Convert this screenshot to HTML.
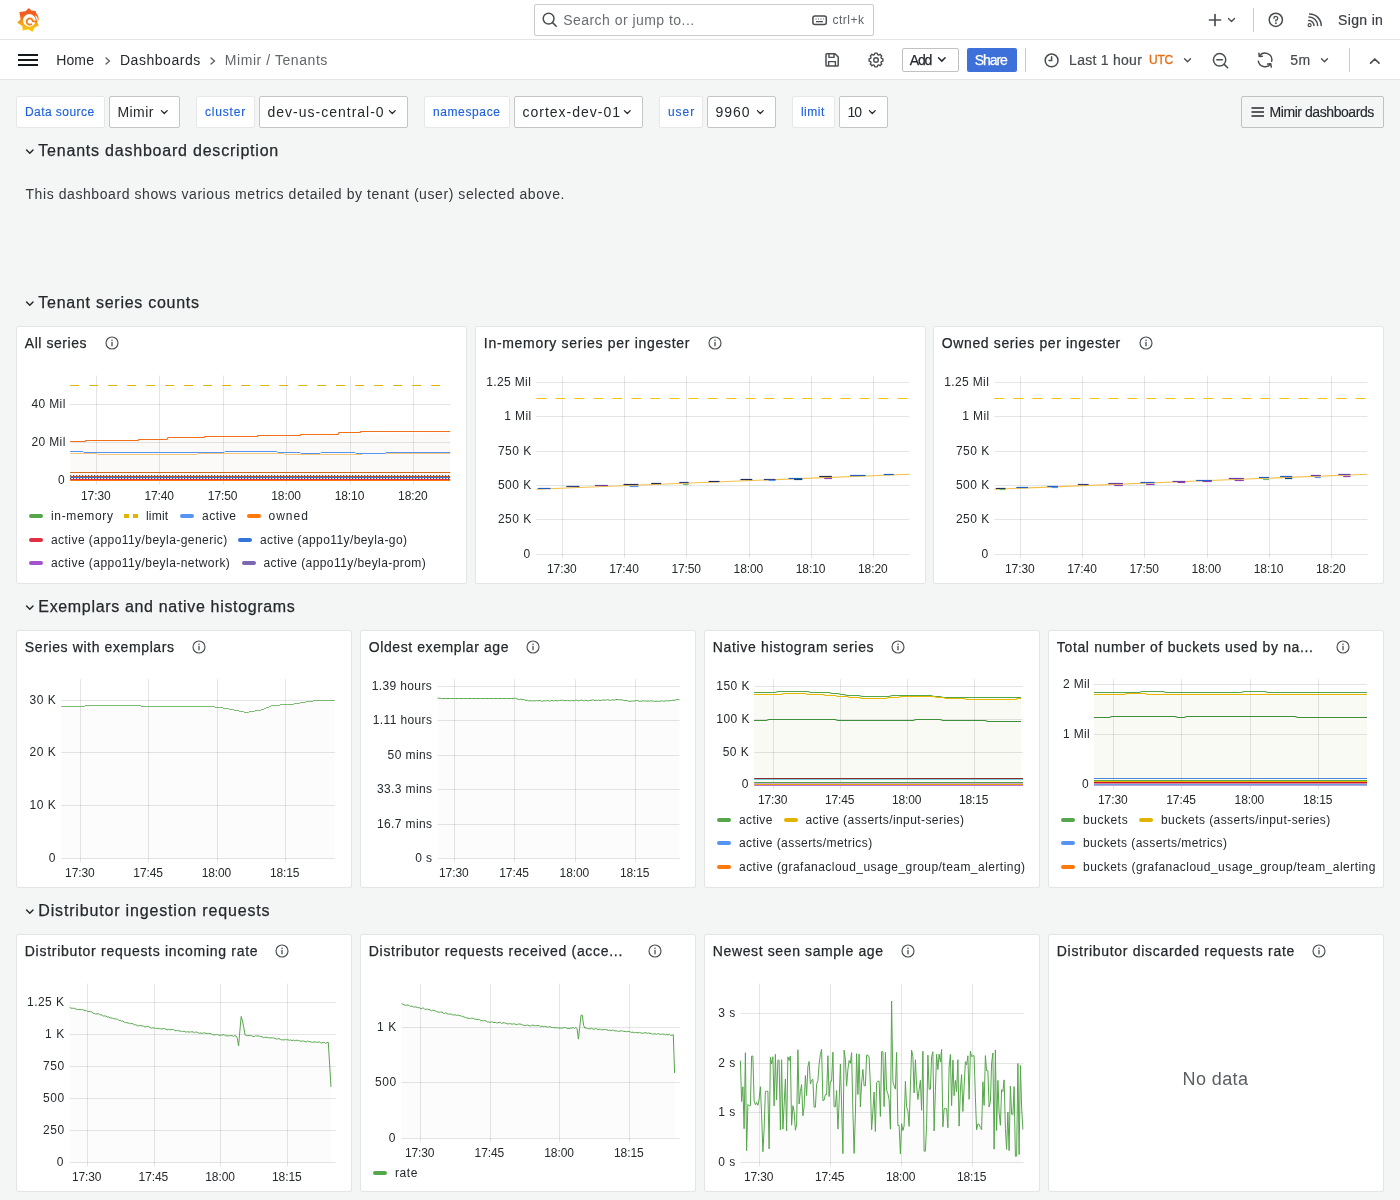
<!DOCTYPE html><html><head><meta charset="utf-8"><title>Mimir / Tenants - Dashboards - Grafana</title>
<style>
html,body{margin:0;padding:0}
body{width:1400px;height:1200px;overflow:hidden;background:#f4f5f5;position:relative;font-family:"Liberation Sans",sans-serif}
.a{position:absolute;display:block}
.t{position:absolute;white-space:nowrap;font-family:"Liberation Sans",sans-serif;-webkit-font-smoothing:antialiased}
#root{position:absolute;left:0;top:0;width:1400px;height:1200px;will-change:transform}
svg.a{overflow:visible}
</style></head><body><div id="root">

<div class="a" style="left:0px;top:0px;width:1400px;height:39px;background:#ffffff;border-radius:0px"></div>
<div class="a" style="left:0px;top:39px;width:1400px;height:1px;background:#e3e5e6;border-radius:0px"></div>
<div class="a" style="left:0px;top:40px;width:1400px;height:39px;background:#ffffff;border-radius:0px"></div>
<div class="a" style="left:0px;top:79px;width:1400px;height:1px;background:#e3e5e6;border-radius:0px"></div>
<svg class="a" style="left:14px;top:5px;" width="30" height="30" viewBox="0 0 30 30"><defs><linearGradient id="lg" x1="0" y1="1" x2="0" y2="0"><stop offset="0" stop-color="#f9d30c"/><stop offset="0.35" stop-color="#f8a515"/><stop offset="0.7" stop-color="#f1601f"/><stop offset="1" stop-color="#f05a28"/></linearGradient></defs>
<path fill="url(#lg)" d="M15 2.9 L17.3 5.6 L21.6 5.9 L22.4 8.6 Q24.6 10.6 24.8 14.2 L23.2 17.6 L24.8 20.5 L20.6 22.4 L18.4 26.9 L14.6 24.6 L8.6 25.6 L8.4 21.2 L3.2 17.6 L6.6 14.6 L5.4 7 L11.4 6.2 Z"/>
<circle cx="15.3" cy="15.4" r="6.3" fill="#fff"/>
<path d="M21.3 10.6 Q23.6 13 23.4 15.6" stroke="#fff" stroke-width="1.1" fill="none"/>
<path d="M17.3 19.2 A3.1 3.1 0 1 1 18.8 16.2 L22 16.6" stroke="#f37a1d" stroke-width="1.8" fill="none" stroke-linecap="round"/></svg>
<div class="a" style="left:534px;top:4px;width:340px;height:32px;background:#ffffff;border-radius:2px;border:1px solid #c9cbce;box-sizing:border-box"></div>
<svg class="a" style="left:542px;top:12px;" width="16" height="16" viewBox="0 0 16 16"><circle cx="6.6" cy="6.6" r="5.4" stroke="#4a4e53" stroke-width="1.5" fill="none"/><path d="M10.6 10.6 L14.2 14.2" stroke="#4a4e53" stroke-width="1.6" stroke-linecap="round"/></svg>
<span class="t" style="left:563.20px;top:12.85px;font-size:14px;line-height:14px;color:#6a6e72;letter-spacing:0.463px">Search or jump to...</span>
<svg class="a" style="left:812px;top:15px;" width="16" height="10" viewBox="0 0 16 10"><rect x="0.9" y="0.9" width="13.4" height="8.6" rx="2" stroke="#4a4e53" stroke-width="1.5" fill="none"/><path d="M3.5 4 h1 M6 4 h1 M8.5 4 h1 M11 4 h0.8 M4 6.6 h7" stroke="#4a4e53" stroke-width="1.1"/></svg>
<span class="t" style="left:832.40px;top:13.84px;font-size:12px;line-height:12px;color:#5f6368;letter-spacing:0.500px">ctrl+k</span>
<svg class="a" style="left:1208px;top:13px;" width="14" height="14" viewBox="0 0 14 14"><path d="M7 1.5 V12.5 M1.5 7 H12.5" stroke="#4a4e53" stroke-width="1.7" stroke-linecap="round"/></svg>
<svg class="a" style="left:1227px;top:16px;" width="10" height="8" viewBox="0 0 10 8"><path d="M1.5 2.5 L4.5 5.5 L7.5 2.5" stroke="#4a4e53" stroke-width="1.4" fill="none" stroke-linecap="round" stroke-linejoin="round"/></svg>
<div class="a" style="left:1253px;top:8px;width:1px;height:24px;background:#c9cbce;border-radius:0px"></div>
<svg class="a" style="left:1268px;top:12px;" width="16" height="16" viewBox="0 0 16 16"><circle cx="7.8" cy="7.8" r="6.6" stroke="#4a4e53" stroke-width="1.5" fill="none"/><path d="M5.9 6.2 A1.9 1.9 0 1 1 7.9 8.2 V9" stroke="#4a4e53" stroke-width="1.4" fill="none" stroke-linecap="round"/><circle cx="7.9" cy="11.2" r="0.9" fill="#4a4e53"/></svg>
<svg class="a" style="left:1307px;top:13px;" width="16" height="15" viewBox="0 0 16 15"><circle cx="2.6" cy="12.2" r="1.5" stroke="#4a4e53" stroke-width="1.2" fill="none"/><path d="M1.8 7.6 A5 5 0 0 1 7 12.6 M2 4 A8.6 8.6 0 0 1 10.6 12.6 M2.6 1 A11.6 11.6 0 0 1 14.2 12.6" stroke="#4a4e53" stroke-width="1.5" fill="none" stroke-linecap="round"/></svg>
<span class="t" style="left:1338.00px;top:13.35px;font-size:14px;line-height:14px;color:#3a3e42;letter-spacing:0.350px;-webkit-text-stroke:0.2px #3a3e42">Sign in</span>
<svg class="a" style="left:17px;top:53px;" width="22" height="14" viewBox="0 0 22 14"><path d="M1 2 H21 M1 7 H21 M1 12 H21" stroke="#15181c" stroke-width="2" stroke-linecap="butt"/></svg>
<span class="t" style="left:56.20px;top:53.15px;font-size:14px;line-height:14px;color:#24292e;letter-spacing:0.133px">Home</span>
<svg class="a" style="left:104px;top:56px;" width="8" height="10" viewBox="0 0 8 10"><path d="M2 2 L5.5 5 L2 8" stroke="#5a5e62" stroke-width="1.3" fill="none" stroke-linecap="round"/></svg>
<span class="t" style="left:119.90px;top:53.15px;font-size:14px;line-height:14px;color:#24292e;letter-spacing:0.544px">Dashboards</span>
<svg class="a" style="left:209px;top:56px;" width="8" height="10" viewBox="0 0 8 10"><path d="M2 2 L5.5 5 L2 8" stroke="#5a5e62" stroke-width="1.3" fill="none" stroke-linecap="round"/></svg>
<span class="t" style="left:224.80px;top:53.15px;font-size:14px;line-height:14px;color:#62666b;letter-spacing:0.564px">Mimir / Tenants</span>
<svg class="a" style="left:824px;top:52px;" width="16" height="16" viewBox="0 0 16 16"><path d="M2 2.6 A0.8 0.8 0 0 1 2.8 1.8 H11 L14.2 5 V13.2 A0.8 0.8 0 0 1 13.4 14 H2.8 A0.8 0.8 0 0 1 2 13.2 Z" stroke="#4a4e53" stroke-width="1.5" fill="none" stroke-linejoin="round"/><path d="M5 2 V5.4 H10 V2 M4.6 14 V9.6 H11.4 V14" stroke="#4a4e53" stroke-width="1.4" fill="none"/></svg>
<svg class="a" style="left:868px;top:52px;" width="16" height="16" viewBox="0 0 16 16"><path d="M6.35 2.65 L6.82 1.10 L9.18 1.10 L9.65 2.65 L10.61 3.05 L12.04 2.28 L13.72 3.96 L12.95 5.39 L13.35 6.35 L14.90 6.82 L14.90 9.18 L13.35 9.65 L12.95 10.61 L13.72 12.04 L12.04 13.72 L10.61 12.95 L9.65 13.35 L9.18 14.90 L6.82 14.90 L6.35 13.35 L5.39 12.95 L3.96 13.72 L2.28 12.04 L3.05 10.61 L2.65 9.65 L1.10 9.18 L1.10 6.82 L2.65 6.35 L3.05 5.39 L2.28 3.96 L3.96 2.28 L5.39 3.05 Z" stroke="#4a4e53" stroke-width="1.4" fill="none" stroke-linejoin="round"/><circle cx="8" cy="8" r="2.3" stroke="#4a4e53" stroke-width="1.4" fill="none"/></svg>
<div class="a" style="left:902px;top:48px;width:57px;height:24px;background:#ffffff;border-radius:2px;border:1px solid #bfc1c4;box-sizing:border-box"></div>
<span class="t" style="left:909.80px;top:52.75px;font-size:14px;line-height:14px;color:#24292e;letter-spacing:-1.250px;-webkit-text-stroke:0.25px #24292e">Add</span>
<svg class="a" style="left:937px;top:56px;" width="10" height="8" viewBox="0 0 10 8"><path d="M1.5 1.8 L4.8 5.1 L8.1 1.8" stroke="#24292e" stroke-width="1.5" fill="none" stroke-linecap="round" stroke-linejoin="round"/></svg>
<div class="a" style="left:967px;top:48px;width:50px;height:24px;background:#3d71d9;border-radius:2px;border:none;box-sizing:border-box"></div>
<span class="t" style="left:974.80px;top:52.75px;font-size:14px;line-height:14px;color:#ffffff;letter-spacing:-1.100px;-webkit-text-stroke:0.25px #ffffff">Share</span>
<div class="a" style="left:1025px;top:48px;width:1px;height:24px;background:#c9cbce;border-radius:0px"></div>
<svg class="a" style="left:1044px;top:53px;" width="16" height="16" viewBox="0 0 16 16"><circle cx="7.6" cy="7.4" r="6.4" stroke="#4a4e53" stroke-width="1.5" fill="none"/><path d="M7.6 3.8 V7.6 H5" stroke="#4a4e53" stroke-width="1.5" fill="none" stroke-linecap="round"/></svg>
<span class="t" style="left:1069.10px;top:53.15px;font-size:14px;line-height:14px;color:#474b50;letter-spacing:0.270px;-webkit-text-stroke:0.2px #474b50">Last 1 hour</span>
<span class="t" style="left:1149.00px;top:53.84px;font-size:12px;line-height:12px;color:#e86b15;letter-spacing:-0.250px;-webkit-text-stroke:0.3px #e86b15">UTC</span>
<svg class="a" style="left:1183px;top:57px;" width="10" height="8" viewBox="0 0 10 8"><path d="M1.5 1.8 L4.5 4.8 L7.5 1.8" stroke="#4a4e53" stroke-width="1.4" fill="none" stroke-linecap="round" stroke-linejoin="round"/></svg>
<svg class="a" style="left:1212px;top:52px;" width="18" height="17" viewBox="0 0 18 17"><circle cx="7.6" cy="7.8" r="6.2" stroke="#4a4e53" stroke-width="1.5" fill="none"/><path d="M4.8 7.8 H10.4 M12.2 12.4 L15.6 15.8" stroke="#4a4e53" stroke-width="1.6" stroke-linecap="round"/></svg>
<svg class="a" style="left:1256px;top:52px;" width="17" height="17" viewBox="0 0 17 17"><path d="M15.7 9.2 A6.8 6.8 0 0 0 3.4 4.1 M2.3 9.2 A6.8 6.8 0 0 0 14.5 11.9" stroke="#4a4e53" stroke-width="1.5" fill="none" stroke-linecap="round"/><path d="M2.9 1.2 L3.3 4.4 L6.4 4.3 M15.3 15 L14.7 11.8 L11.6 12.1" stroke="#4a4e53" stroke-width="1.5" fill="none" stroke-linecap="round" stroke-linejoin="round"/></svg>
<span class="t" style="left:1290.30px;top:53.15px;font-size:14px;line-height:14px;color:#474b50;letter-spacing:0.500px;-webkit-text-stroke:0.2px #474b50">5m</span>
<svg class="a" style="left:1320px;top:57px;" width="10" height="8" viewBox="0 0 10 8"><path d="M1.5 1.8 L4.5 4.8 L7.5 1.8" stroke="#4a4e53" stroke-width="1.4" fill="none" stroke-linecap="round" stroke-linejoin="round"/></svg>
<div class="a" style="left:1349px;top:48px;width:1px;height:24px;background:#c9cbce;border-radius:0px"></div>
<svg class="a" style="left:1369px;top:57px;" width="12" height="8" viewBox="0 0 12 8"><path d="M1.6 6.2 L5.8 2 L10 6.2" stroke="#4a4e53" stroke-width="1.7" fill="none" stroke-linecap="round" stroke-linejoin="round"/></svg>
<div class="a" style="left:16px;top:96px;width:89px;height:32px;background:#ffffff;border-radius:2px;border:1px solid #e6e7e8;box-sizing:border-box"></div>
<span class="t" style="left:24.90px;top:106.14px;font-size:12px;line-height:12px;color:#1f62e0;letter-spacing:0.460px;-webkit-text-stroke:0.15px #1f62e0">Data source</span>
<div class="a" style="left:109px;top:96px;width:71px;height:32px;background:#ffffff;border-radius:2px;border:1px solid #c3c5c8;box-sizing:border-box"></div>
<span class="t" style="left:117.50px;top:105.15px;font-size:14px;line-height:14px;color:#24292e;letter-spacing:0.400px">Mimir</span>
<svg class="a" style="left:159.5px;top:108.5px;" width="9" height="7" viewBox="0 0 9 7"><path d="M1.4 1.6 L4.3 4.5 L7.2 1.6" stroke="#24292e" stroke-width="1.3" fill="none" stroke-linecap="round" stroke-linejoin="round"/></svg>
<div class="a" style="left:196px;top:96px;width:59px;height:32px;background:#ffffff;border-radius:2px;border:1px solid #e6e7e8;box-sizing:border-box"></div>
<span class="t" style="left:204.90px;top:106.14px;font-size:12px;line-height:12px;color:#1f62e0;letter-spacing:0.833px;-webkit-text-stroke:0.15px #1f62e0">cluster</span>
<div class="a" style="left:259px;top:96px;width:149px;height:32px;background:#ffffff;border-radius:2px;border:1px solid #c3c5c8;box-sizing:border-box"></div>
<span class="t" style="left:267.50px;top:105.15px;font-size:14px;line-height:14px;color:#24292e;letter-spacing:1.000px">dev-us-central-0</span>
<svg class="a" style="left:387.5px;top:108.5px;" width="9" height="7" viewBox="0 0 9 7"><path d="M1.4 1.6 L4.3 4.5 L7.2 1.6" stroke="#24292e" stroke-width="1.3" fill="none" stroke-linecap="round" stroke-linejoin="round"/></svg>
<div class="a" style="left:424px;top:96px;width:86px;height:32px;background:#ffffff;border-radius:2px;border:1px solid #e6e7e8;box-sizing:border-box"></div>
<span class="t" style="left:432.90px;top:106.14px;font-size:12px;line-height:12px;color:#1f62e0;letter-spacing:0.625px;-webkit-text-stroke:0.15px #1f62e0">namespace</span>
<div class="a" style="left:514px;top:96px;width:129px;height:32px;background:#ffffff;border-radius:2px;border:1px solid #c3c5c8;box-sizing:border-box"></div>
<span class="t" style="left:522.50px;top:105.15px;font-size:14px;line-height:14px;color:#24292e;letter-spacing:1.000px">cortex-dev-01</span>
<svg class="a" style="left:622.5px;top:108.5px;" width="9" height="7" viewBox="0 0 9 7"><path d="M1.4 1.6 L4.3 4.5 L7.2 1.6" stroke="#24292e" stroke-width="1.3" fill="none" stroke-linecap="round" stroke-linejoin="round"/></svg>
<div class="a" style="left:659px;top:96px;width:44px;height:32px;background:#ffffff;border-radius:2px;border:1px solid #e6e7e8;box-sizing:border-box"></div>
<span class="t" style="left:667.90px;top:106.14px;font-size:12px;line-height:12px;color:#1f62e0;letter-spacing:1.000px;-webkit-text-stroke:0.15px #1f62e0">user</span>
<div class="a" style="left:707px;top:96px;width:69px;height:32px;background:#ffffff;border-radius:2px;border:1px solid #c3c5c8;box-sizing:border-box"></div>
<span class="t" style="left:715.50px;top:105.15px;font-size:14px;line-height:14px;color:#24292e;letter-spacing:1.000px">9960</span>
<svg class="a" style="left:755.5px;top:108.5px;" width="9" height="7" viewBox="0 0 9 7"><path d="M1.4 1.6 L4.3 4.5 L7.2 1.6" stroke="#24292e" stroke-width="1.3" fill="none" stroke-linecap="round" stroke-linejoin="round"/></svg>
<div class="a" style="left:792px;top:96px;width:43px;height:32px;background:#ffffff;border-radius:2px;border:1px solid #e6e7e8;box-sizing:border-box"></div>
<span class="t" style="left:800.90px;top:106.14px;font-size:12px;line-height:12px;color:#1f62e0;letter-spacing:0.500px;-webkit-text-stroke:0.15px #1f62e0">limit</span>
<div class="a" style="left:839px;top:96px;width:49px;height:32px;background:#ffffff;border-radius:2px;border:1px solid #c3c5c8;box-sizing:border-box"></div>
<span class="t" style="left:847.50px;top:105.15px;font-size:14px;line-height:14px;color:#24292e;letter-spacing:-1.000px">10</span>
<svg class="a" style="left:867.5px;top:108.5px;" width="9" height="7" viewBox="0 0 9 7"><path d="M1.4 1.6 L4.3 4.5 L7.2 1.6" stroke="#24292e" stroke-width="1.3" fill="none" stroke-linecap="round" stroke-linejoin="round"/></svg>
<div class="a" style="left:1241px;top:96px;width:143px;height:32px;background:none;border-radius:2px;border:1px solid #bfc1c4;box-sizing:border-box"></div>
<svg class="a" style="left:1250px;top:105px;" width="16" height="14" viewBox="0 0 16 14"><path d="M1.5 3 H14 M1.5 7 H14 M1.5 11 H14" stroke="#24292e" stroke-width="1.6"/></svg>
<span class="t" style="left:1269.50px;top:105.15px;font-size:14px;line-height:14px;color:#24292e;letter-spacing:-0.433px;-webkit-text-stroke:0.15px #24292e">Mimir dashboards</span>
<svg class="a" style="left:25px;top:148px;top:148px" width="10" height="8" viewBox="0 0 10 8"><path d="M1.6 2 L4.8 5.2 L8 2" stroke="#24292e" stroke-width="1.5" fill="none" stroke-linecap="round" stroke-linejoin="round"/></svg>
<span class="t" style="left:38.30px;top:143.46px;font-size:16px;line-height:16px;color:#24292e;letter-spacing:0.786px;-webkit-text-stroke:0.25px #24292e">Tenants dashboard description</span>
<span class="t" style="left:25.50px;top:187.15px;font-size:14px;line-height:14px;color:#33383d;letter-spacing:0.571px">This dashboard shows various metrics detailed by tenant (user) selected above.</span>
<svg class="a" style="left:25px;top:148px;top:300px" width="10" height="8" viewBox="0 0 10 8"><path d="M1.6 2 L4.8 5.2 L8 2" stroke="#24292e" stroke-width="1.5" fill="none" stroke-linecap="round" stroke-linejoin="round"/></svg>
<span class="t" style="left:38.30px;top:295.46px;font-size:16px;line-height:16px;color:#24292e;letter-spacing:0.737px;-webkit-text-stroke:0.25px #24292e">Tenant series counts</span>
<svg class="a" style="left:25px;top:148px;top:604px" width="10" height="8" viewBox="0 0 10 8"><path d="M1.6 2 L4.8 5.2 L8 2" stroke="#24292e" stroke-width="1.5" fill="none" stroke-linecap="round" stroke-linejoin="round"/></svg>
<span class="t" style="left:38.30px;top:599.46px;font-size:16px;line-height:16px;color:#24292e;letter-spacing:0.667px;-webkit-text-stroke:0.25px #24292e">Exemplars and native histograms</span>
<svg class="a" style="left:25px;top:148px;top:908px" width="10" height="8" viewBox="0 0 10 8"><path d="M1.6 2 L4.8 5.2 L8 2" stroke="#24292e" stroke-width="1.5" fill="none" stroke-linecap="round" stroke-linejoin="round"/></svg>
<span class="t" style="left:38.30px;top:903.46px;font-size:16px;line-height:16px;color:#24292e;letter-spacing:0.828px;-webkit-text-stroke:0.25px #24292e">Distributor ingestion requests</span>
<div class="a" style="left:16px;top:326px;width:451px;height:258px;background:#ffffff;border-radius:2px;border:1px solid #e3e5e7;box-sizing:border-box"></div>
<span class="t" style="left:24.80px;top:336.15px;font-size:14px;line-height:14px;color:#24292e;letter-spacing:0.556px;-webkit-text-stroke:0.25px #24292e">All series</span>
<svg class="a" style="left:105px;top:336px;" width="14" height="14" viewBox="0 0 14 14"><circle cx="7" cy="7" r="6" stroke="#4a4e53" stroke-width="1.15" fill="none"/><path d="M7 6.4 V9.8" stroke="#4a4e53" stroke-width="1.3" stroke-linecap="round"/><circle cx="7" cy="4.3" r="0.8" fill="#4a4e53"/></svg>
<svg class="a" style="left:0;top:0" width="1400" height="1200" viewBox="0 0 1400 1200"><path d="M70.2 441.9 L450.2 433.0 L450.2 480.7 L70.2 480.7 Z" fill="#fbfaf8"/><path d="M70.2 404.5 H450.2" stroke="rgba(36,41,46,0.12)" stroke-width="1"/><path d="M70.2 442.5 H450.2" stroke="rgba(36,41,46,0.12)" stroke-width="1"/><path d="M70.2 480.5 H450.2" stroke="rgba(36,41,46,0.12)" stroke-width="1"/><path d="M96.5 375.6 V484.7" stroke="rgba(36,41,46,0.12)" stroke-width="1"/><path d="M159.5 375.6 V484.7" stroke="rgba(36,41,46,0.12)" stroke-width="1"/><path d="M223.5 375.6 V484.7" stroke="rgba(36,41,46,0.12)" stroke-width="1"/><path d="M286.5 375.6 V484.7" stroke="rgba(36,41,46,0.12)" stroke-width="1"/><path d="M350.5 375.6 V484.7" stroke="rgba(36,41,46,0.12)" stroke-width="1"/><path d="M413.5 375.6 V484.7" stroke="rgba(36,41,46,0.12)" stroke-width="1"/><path d="M70.2 385.5 L450.2 385.5" stroke="#e0b400" stroke-width="1" fill="none" stroke-opacity="1" stroke-dasharray="9 10" stroke-linejoin="round"/><path d="M70.2 453.5 L97.0 453.5 L98.0 454.5 L197.0 454.5 L198.0 453.5 L284.0 453.5 L285.0 454.5 L362.0 454.5 L363.0 453.5 L450.2 453.5" stroke="#f2c77a" stroke-width="1" fill="none" stroke-opacity="1" stroke-linejoin="round"/><path d="M70.2 451.5 L83.0 451.5 L84.0 452.5 L224.0 452.5 L225.0 451.5 L277.0 451.5 L278.0 452.5 L300.0 452.5 L301.0 453.5 L320.0 453.5 L321.0 452.5 L355.0 452.5 L356.0 453.5 L385.0 453.5 L386.0 452.5 L450.2 452.5" stroke="#5794f2" stroke-width="1" fill="none" stroke-opacity="1" stroke-linejoin="round"/><path d="M70.2 441.5 L85.0 441.5 L86.0 440.5 L138.0 440.5 L139.0 439.5 L167.0 439.5 L168.0 437.5 L204.0 437.5 L205.0 436.5 L257.0 436.5 L258.0 435.5 L300.0 435.5 L301.0 434.5 L338.0 434.5 L339.0 432.5 L360.0 432.5 L361.0 431.5 L450.2 431.5" stroke="#f2701c" stroke-width="1.2" fill="none" stroke-opacity="1" stroke-linejoin="round"/><path d="M70.2 472.5 L450.2 472.5" stroke="#d2691e" stroke-width="1" fill="none" stroke-opacity="1" stroke-linejoin="round"/><path d="M70.2 475.5 L450.2 475.5" stroke="#333333" stroke-width="1" fill="none" stroke-opacity="1" stroke-dasharray="1 2" stroke-linejoin="round"/><path d="M70.2 476.5 L450.2 476.5" stroke="#c8501e" stroke-width="1" fill="none" stroke-opacity="1" stroke-linejoin="round"/><path d="M70.2 477.5 L450.2 477.5" stroke="#3274d9" stroke-width="1" fill="none" stroke-opacity="1" stroke-linejoin="round"/><path d="M70.2 478.5 L450.2 478.5" stroke="#333333" stroke-width="1" fill="none" stroke-opacity="1" stroke-dasharray="1 2" stroke-linejoin="round"/><path d="M70.2 479.5 L450.2 479.5" stroke="#6ed0e0" stroke-width="1" fill="none" stroke-opacity="1" stroke-linejoin="round"/><path d="M70.2 479.5 L450.2 479.5" stroke="#e02f44" stroke-width="1" fill="none" stroke-opacity="1" stroke-linejoin="round"/><path d="M70.2 480.5 L450.2 480.5" stroke="#ff780a" stroke-width="1" fill="none" stroke-opacity="1" stroke-linejoin="round"/></svg>
<span class="t" style="left:31.38px;top:397.84px;font-size:12px;line-height:12px;color:#24292e;letter-spacing:0.384px">40 Mil</span>
<span class="t" style="left:31.38px;top:435.84px;font-size:12px;line-height:12px;color:#24292e;letter-spacing:0.384px">20 Mil</span>
<span class="t" style="left:57.88px;top:473.84px;font-size:12px;line-height:12px;color:#24292e;letter-spacing:0.000px">0</span>
<span class="t" style="left:81.00px;top:489.54px;font-size:12px;line-height:12px;color:#24292e;letter-spacing:-0.100px">17:30</span>
<span class="t" style="left:144.42px;top:489.54px;font-size:12px;line-height:12px;color:#24292e;letter-spacing:-0.100px">17:40</span>
<span class="t" style="left:207.84px;top:489.54px;font-size:12px;line-height:12px;color:#24292e;letter-spacing:-0.100px">17:50</span>
<span class="t" style="left:271.26px;top:489.54px;font-size:12px;line-height:12px;color:#24292e;letter-spacing:-0.100px">18:00</span>
<span class="t" style="left:334.68px;top:489.54px;font-size:12px;line-height:12px;color:#24292e;letter-spacing:-0.100px">18:10</span>
<span class="t" style="left:398.10px;top:489.54px;font-size:12px;line-height:12px;color:#24292e;letter-spacing:-0.100px">18:20</span>
<div class="a" style="left:29px;top:513.7px;width:14px;height:4px;background:#56a64b;border-radius:2px"></div>
<span class="t" style="left:51.00px;top:509.94px;font-size:12px;line-height:12px;color:#24292e;letter-spacing:0.662px">in-memory</span>
<div class="a" style="left:124px;top:513.7px;width:5px;height:4px;background:#e0b400;border-radius:0px"></div>
<div class="a" style="left:133px;top:513.7px;width:5px;height:4px;background:#e0b400;border-radius:0px"></div>
<span class="t" style="left:146.00px;top:509.94px;font-size:12px;line-height:12px;color:#24292e;letter-spacing:0.200px">limit</span>
<div class="a" style="left:180px;top:513.7px;width:14px;height:4px;background:#5794f2;border-radius:2px"></div>
<span class="t" style="left:202.00px;top:509.94px;font-size:12px;line-height:12px;color:#24292e;letter-spacing:0.512px">active</span>
<div class="a" style="left:246.5px;top:513.7px;width:14px;height:4px;background:#ff780a;border-radius:2px"></div>
<span class="t" style="left:268.50px;top:509.94px;font-size:12px;line-height:12px;color:#24292e;letter-spacing:1.000px">owned</span>
<div class="a" style="left:29px;top:538px;width:14px;height:4px;background:#e02f44;border-radius:2px"></div>
<span class="t" style="left:51.00px;top:534.24px;font-size:12px;line-height:12px;color:#24292e;letter-spacing:0.448px">active (appo11y/beyla-generic)</span>
<div class="a" style="left:238px;top:538px;width:14px;height:4px;background:#3274d9;border-radius:2px"></div>
<span class="t" style="left:260.00px;top:534.24px;font-size:12px;line-height:12px;color:#24292e;letter-spacing:0.408px">active (appo11y/beyla-go)</span>
<div class="a" style="left:29px;top:560.9px;width:14px;height:4px;background:#a352cc;border-radius:2px"></div>
<span class="t" style="left:51.00px;top:557.14px;font-size:12px;line-height:12px;color:#24292e;letter-spacing:0.448px">active (appo11y/beyla-network)</span>
<div class="a" style="left:241.5px;top:560.9px;width:14px;height:4px;background:#7c68b0;border-radius:2px"></div>
<span class="t" style="left:263.50px;top:557.14px;font-size:12px;line-height:12px;color:#24292e;letter-spacing:0.423px">active (appo11y/beyla-prom)</span>
<div class="a" style="left:475px;top:326px;width:451px;height:258px;background:#ffffff;border-radius:2px;border:1px solid #e3e5e7;box-sizing:border-box"></div>
<span class="t" style="left:483.80px;top:336.15px;font-size:14px;line-height:14px;color:#24292e;letter-spacing:0.704px;-webkit-text-stroke:0.25px #24292e">In-memory series per ingester</span>
<svg class="a" style="left:707.5px;top:336px;" width="14" height="14" viewBox="0 0 14 14"><circle cx="7" cy="7" r="6" stroke="#4a4e53" stroke-width="1.15" fill="none"/><path d="M7 6.4 V9.8" stroke="#4a4e53" stroke-width="1.3" stroke-linecap="round"/><circle cx="7" cy="4.3" r="0.8" fill="#4a4e53"/></svg>
<svg class="a" style="left:0;top:0" width="1400" height="1200" viewBox="0 0 1400 1200"><path d="M536.4 382.5 H909.4" stroke="rgba(36,41,46,0.12)" stroke-width="1"/><path d="M536.4 416.5 H909.4" stroke="rgba(36,41,46,0.12)" stroke-width="1"/><path d="M536.4 451.5 H909.4" stroke="rgba(36,41,46,0.12)" stroke-width="1"/><path d="M536.4 485.5 H909.4" stroke="rgba(36,41,46,0.12)" stroke-width="1"/><path d="M536.4 519.5 H909.4" stroke="rgba(36,41,46,0.12)" stroke-width="1"/><path d="M536.4 554.5 H909.4" stroke="rgba(36,41,46,0.12)" stroke-width="1"/><path d="M562.5 375.6 V558.0" stroke="rgba(36,41,46,0.12)" stroke-width="1"/><path d="M624.5 375.6 V558.0" stroke="rgba(36,41,46,0.12)" stroke-width="1"/><path d="M686.5 375.6 V558.0" stroke="rgba(36,41,46,0.12)" stroke-width="1"/><path d="M749.5 375.6 V558.0" stroke="rgba(36,41,46,0.12)" stroke-width="1"/><path d="M811.5 375.6 V558.0" stroke="rgba(36,41,46,0.12)" stroke-width="1"/><path d="M873.5 375.6 V558.0" stroke="rgba(36,41,46,0.12)" stroke-width="1"/><path d="M536.4 398.5 L909.4 398.5" stroke="#f2c40c" stroke-width="1.2" fill="none" stroke-opacity="1" stroke-dasharray="10 9" stroke-linejoin="round"/><path d="M536.4 489.20 L909.4 474.20" stroke="#f2c04a" stroke-width="1.1" fill="none" stroke-opacity="1" stroke-linejoin="round"/><path d="M537.8 488.5 L550.6 488.5" stroke="#1f60c4" stroke-width="1.2" fill="none" stroke-opacity="1" stroke-linejoin="round"/><path d="M566.3 486.5 L579.4 486.5" stroke="#2f3d7a" stroke-width="1.2" fill="none" stroke-opacity="1" stroke-linejoin="round"/><path d="M595.0 485.5 L607.9 485.5" stroke="#6b3fa0" stroke-width="1.2" fill="none" stroke-opacity="1" stroke-linejoin="round"/><path d="M623.5 484.5 L638.4 484.5" stroke="#222a55" stroke-width="1.2" fill="none" stroke-opacity="1" stroke-linejoin="round"/><path d="M629.5 486.5 L638.4 486.5" stroke="#5794f2" stroke-width="1.2" fill="none" stroke-opacity="1" stroke-linejoin="round"/><path d="M651.2 483.5 L661.2 483.5" stroke="#222a55" stroke-width="1.2" fill="none" stroke-opacity="1" stroke-linejoin="round"/><path d="M679.3 482.5 L688.7 482.5" stroke="#2f3d7a" stroke-width="1.2" fill="none" stroke-opacity="1" stroke-linejoin="round"/><path d="M683.1 484.5 L688.7 484.5" stroke="#73bf69" stroke-width="1.2" fill="none" stroke-opacity="1" stroke-linejoin="round"/><path d="M708.6 481.5 L719.5 481.5" stroke="#222a55" stroke-width="1.2" fill="none" stroke-opacity="1" stroke-linejoin="round"/><path d="M740.5 479.5 L752.3 479.5" stroke="#222a55" stroke-width="1.2" fill="none" stroke-opacity="1" stroke-linejoin="round"/><path d="M763.9 479.5 L775.5 479.5" stroke="#2f3d7a" stroke-width="1.2" fill="none" stroke-opacity="1" stroke-linejoin="round"/><path d="M768.5 480.5 L775.5 480.5" stroke="#5794f2" stroke-width="1.2" fill="none" stroke-opacity="1" stroke-linejoin="round"/><path d="M788.6 478.5 L802.3 478.5" stroke="#1f60c4" stroke-width="1.2" fill="none" stroke-opacity="1" stroke-linejoin="round"/><path d="M794.1 479.5 L802.3 479.5" stroke="#0a437c" stroke-width="1.2" fill="none" stroke-opacity="1" stroke-linejoin="round"/><path d="M819.2 476.5 L831.9 476.5" stroke="#222a55" stroke-width="1.2" fill="none" stroke-opacity="1" stroke-linejoin="round"/><path d="M824.3 478.5 L831.9 478.5" stroke="#8e3fb0" stroke-width="1.2" fill="none" stroke-opacity="1" stroke-linejoin="round"/><path d="M850.1 475.5 L865.6 475.5" stroke="#1f60c4" stroke-width="1.2" fill="none" stroke-opacity="1" stroke-linejoin="round"/><path d="M883.7 474.5 L893.8 474.5" stroke="#1f60c4" stroke-width="1.2" fill="none" stroke-opacity="1" stroke-linejoin="round"/></svg>
<span class="t" style="left:486.28px;top:375.84px;font-size:12px;line-height:12px;color:#24292e;letter-spacing:0.360px">1.25 Mil</span>
<span class="t" style="left:504.30px;top:409.84px;font-size:12px;line-height:12px;color:#24292e;letter-spacing:0.375px">1 Mil</span>
<span class="t" style="left:497.94px;top:444.84px;font-size:12px;line-height:12px;color:#24292e;letter-spacing:0.465px">750 K</span>
<span class="t" style="left:497.94px;top:478.84px;font-size:12px;line-height:12px;color:#24292e;letter-spacing:0.465px">500 K</span>
<span class="t" style="left:497.94px;top:512.84px;font-size:12px;line-height:12px;color:#24292e;letter-spacing:0.465px">250 K</span>
<span class="t" style="left:523.38px;top:547.84px;font-size:12px;line-height:12px;color:#24292e;letter-spacing:0.000px">0</span>
<span class="t" style="left:547.00px;top:562.84px;font-size:12px;line-height:12px;color:#24292e;letter-spacing:-0.100px">17:30</span>
<span class="t" style="left:609.20px;top:562.84px;font-size:12px;line-height:12px;color:#24292e;letter-spacing:-0.100px">17:40</span>
<span class="t" style="left:671.40px;top:562.84px;font-size:12px;line-height:12px;color:#24292e;letter-spacing:-0.100px">17:50</span>
<span class="t" style="left:733.60px;top:562.84px;font-size:12px;line-height:12px;color:#24292e;letter-spacing:-0.100px">18:00</span>
<span class="t" style="left:795.80px;top:562.84px;font-size:12px;line-height:12px;color:#24292e;letter-spacing:-0.100px">18:10</span>
<span class="t" style="left:858.00px;top:562.84px;font-size:12px;line-height:12px;color:#24292e;letter-spacing:-0.100px">18:20</span>
<div class="a" style="left:933px;top:326px;width:451px;height:258px;background:#ffffff;border-radius:2px;border:1px solid #e3e5e7;box-sizing:border-box"></div>
<span class="t" style="left:941.80px;top:336.15px;font-size:14px;line-height:14px;color:#24292e;letter-spacing:0.625px;-webkit-text-stroke:0.25px #24292e">Owned series per ingester</span>
<svg class="a" style="left:1138.8px;top:336px;" width="14" height="14" viewBox="0 0 14 14"><circle cx="7" cy="7" r="6" stroke="#4a4e53" stroke-width="1.15" fill="none"/><path d="M7 6.4 V9.8" stroke="#4a4e53" stroke-width="1.3" stroke-linecap="round"/><circle cx="7" cy="4.3" r="0.8" fill="#4a4e53"/></svg>
<svg class="a" style="left:0;top:0" width="1400" height="1200" viewBox="0 0 1400 1200"><path d="M994.4 382.5 H1367.4" stroke="rgba(36,41,46,0.12)" stroke-width="1"/><path d="M994.4 416.5 H1367.4" stroke="rgba(36,41,46,0.12)" stroke-width="1"/><path d="M994.4 451.5 H1367.4" stroke="rgba(36,41,46,0.12)" stroke-width="1"/><path d="M994.4 485.5 H1367.4" stroke="rgba(36,41,46,0.12)" stroke-width="1"/><path d="M994.4 519.5 H1367.4" stroke="rgba(36,41,46,0.12)" stroke-width="1"/><path d="M994.4 554.5 H1367.4" stroke="rgba(36,41,46,0.12)" stroke-width="1"/><path d="M1020.5 375.6 V558.0" stroke="rgba(36,41,46,0.12)" stroke-width="1"/><path d="M1082.5 375.6 V558.0" stroke="rgba(36,41,46,0.12)" stroke-width="1"/><path d="M1144.5 375.6 V558.0" stroke="rgba(36,41,46,0.12)" stroke-width="1"/><path d="M1207.5 375.6 V558.0" stroke="rgba(36,41,46,0.12)" stroke-width="1"/><path d="M1269.5 375.6 V558.0" stroke="rgba(36,41,46,0.12)" stroke-width="1"/><path d="M1331.5 375.6 V558.0" stroke="rgba(36,41,46,0.12)" stroke-width="1"/><path d="M994.4 398.5 L1367.4 398.5" stroke="#f2c40c" stroke-width="1.2" fill="none" stroke-opacity="1" stroke-dasharray="10 9" stroke-linejoin="round"/><path d="M994.4 489.20 L1367.4 474.20" stroke="#f2c04a" stroke-width="1.1" fill="none" stroke-opacity="1" stroke-linejoin="round"/><path d="M995.8 488.5 L1005.5 488.5" stroke="#222a55" stroke-width="1.2" fill="none" stroke-opacity="1" stroke-linejoin="round"/><path d="M999.7 489.5 L1005.5 489.5" stroke="#73bf69" stroke-width="1.2" fill="none" stroke-opacity="1" stroke-linejoin="round"/><path d="M1016.3 487.5 L1028.1 487.5" stroke="#1f60c4" stroke-width="1.2" fill="none" stroke-opacity="1" stroke-linejoin="round"/><path d="M1047.3 486.5 L1057.9 486.5" stroke="#1f60c4" stroke-width="1.2" fill="none" stroke-opacity="1" stroke-linejoin="round"/><path d="M1051.6 487.5 L1057.9 487.5" stroke="#5794f2" stroke-width="1.2" fill="none" stroke-opacity="1" stroke-linejoin="round"/><path d="M1077.8 484.5 L1088.6 484.5" stroke="#2f3d7a" stroke-width="1.2" fill="none" stroke-opacity="1" stroke-linejoin="round"/><path d="M1108.3 483.5 L1122.9 483.5" stroke="#6b3fa0" stroke-width="1.2" fill="none" stroke-opacity="1" stroke-linejoin="round"/><path d="M1114.2 485.5 L1122.9 485.5" stroke="#8e3fb0" stroke-width="1.2" fill="none" stroke-opacity="1" stroke-linejoin="round"/><path d="M1140.4 482.5 L1154.6 482.5" stroke="#1f60c4" stroke-width="1.2" fill="none" stroke-opacity="1" stroke-linejoin="round"/><path d="M1146.1 484.5 L1154.6 484.5" stroke="#8e3fb0" stroke-width="1.2" fill="none" stroke-opacity="1" stroke-linejoin="round"/><path d="M1172.6 481.5 L1185.2 481.5" stroke="#6b3fa0" stroke-width="1.2" fill="none" stroke-opacity="1" stroke-linejoin="round"/><path d="M1177.6 482.5 L1185.2 482.5" stroke="#8e3fb0" stroke-width="1.2" fill="none" stroke-opacity="1" stroke-linejoin="round"/><path d="M1196.2 480.5 L1211.8 480.5" stroke="#1f60c4" stroke-width="1.2" fill="none" stroke-opacity="1" stroke-linejoin="round"/><path d="M1202.5 481.5 L1211.8 481.5" stroke="#8e3fb0" stroke-width="1.2" fill="none" stroke-opacity="1" stroke-linejoin="round"/><path d="M1228.7 478.5 L1243.8 478.5" stroke="#6b3fa0" stroke-width="1.2" fill="none" stroke-opacity="1" stroke-linejoin="round"/><path d="M1234.7 480.5 L1243.8 480.5" stroke="#8e3fb0" stroke-width="1.2" fill="none" stroke-opacity="1" stroke-linejoin="round"/><path d="M1259.0 477.5 L1269.1 477.5" stroke="#1f60c4" stroke-width="1.2" fill="none" stroke-opacity="1" stroke-linejoin="round"/><path d="M1263.1 479.5 L1269.1 479.5" stroke="#73bf69" stroke-width="1.2" fill="none" stroke-opacity="1" stroke-linejoin="round"/><path d="M1280.1 476.5 L1292.3 476.5" stroke="#1f60c4" stroke-width="1.2" fill="none" stroke-opacity="1" stroke-linejoin="round"/><path d="M1285.0 478.5 L1292.3 478.5" stroke="#0a437c" stroke-width="1.2" fill="none" stroke-opacity="1" stroke-linejoin="round"/><path d="M1310.8 475.5 L1320.8 475.5" stroke="#6b3fa0" stroke-width="1.2" fill="none" stroke-opacity="1" stroke-linejoin="round"/><path d="M1314.8 477.5 L1320.8 477.5" stroke="#5794f2" stroke-width="1.2" fill="none" stroke-opacity="1" stroke-linejoin="round"/><path d="M1338.4 474.5 L1350.5 474.5" stroke="#6b3fa0" stroke-width="1.2" fill="none" stroke-opacity="1" stroke-linejoin="round"/><path d="M1343.2 476.5 L1350.5 476.5" stroke="#8e3fb0" stroke-width="1.2" fill="none" stroke-opacity="1" stroke-linejoin="round"/></svg>
<span class="t" style="left:944.28px;top:375.84px;font-size:12px;line-height:12px;color:#24292e;letter-spacing:0.360px">1.25 Mil</span>
<span class="t" style="left:962.30px;top:409.84px;font-size:12px;line-height:12px;color:#24292e;letter-spacing:0.375px">1 Mil</span>
<span class="t" style="left:955.94px;top:444.84px;font-size:12px;line-height:12px;color:#24292e;letter-spacing:0.465px">750 K</span>
<span class="t" style="left:955.94px;top:478.84px;font-size:12px;line-height:12px;color:#24292e;letter-spacing:0.465px">500 K</span>
<span class="t" style="left:955.94px;top:512.84px;font-size:12px;line-height:12px;color:#24292e;letter-spacing:0.465px">250 K</span>
<span class="t" style="left:981.38px;top:547.84px;font-size:12px;line-height:12px;color:#24292e;letter-spacing:0.000px">0</span>
<span class="t" style="left:1005.00px;top:562.84px;font-size:12px;line-height:12px;color:#24292e;letter-spacing:-0.100px">17:30</span>
<span class="t" style="left:1067.20px;top:562.84px;font-size:12px;line-height:12px;color:#24292e;letter-spacing:-0.100px">17:40</span>
<span class="t" style="left:1129.40px;top:562.84px;font-size:12px;line-height:12px;color:#24292e;letter-spacing:-0.100px">17:50</span>
<span class="t" style="left:1191.60px;top:562.84px;font-size:12px;line-height:12px;color:#24292e;letter-spacing:-0.100px">18:00</span>
<span class="t" style="left:1253.80px;top:562.84px;font-size:12px;line-height:12px;color:#24292e;letter-spacing:-0.100px">18:10</span>
<span class="t" style="left:1316.00px;top:562.84px;font-size:12px;line-height:12px;color:#24292e;letter-spacing:-0.100px">18:20</span>
<div class="a" style="left:16px;top:630px;width:336px;height:258px;background:#ffffff;border-radius:2px;border:1px solid #e3e5e7;box-sizing:border-box"></div>
<span class="t" style="left:24.80px;top:640.15px;font-size:14px;line-height:14px;color:#24292e;letter-spacing:0.615px;-webkit-text-stroke:0.25px #24292e">Series with exemplars</span>
<svg class="a" style="left:191.5px;top:640px;" width="14" height="14" viewBox="0 0 14 14"><circle cx="7" cy="7" r="6" stroke="#4a4e53" stroke-width="1.15" fill="none"/><path d="M7 6.4 V9.8" stroke="#4a4e53" stroke-width="1.3" stroke-linecap="round"/><circle cx="7" cy="4.3" r="0.8" fill="#4a4e53"/></svg>
<svg class="a" style="left:0;top:0" width="1400" height="1200" viewBox="0 0 1400 1200"><path d="M61.4 706.1 L62.4 706.1 L63.4 706.1 L64.4 706.1 L65.4 706.1 L66.4 706.1 L67.4 706.1 L68.4 706.1 L69.4 706.1 L70.4 706.1 L71.4 706.1 L72.4 706.1 L73.4 706.1 L74.4 706.1 L75.4 706.1 L76.4 706.1 L77.4 706.1 L78.4 706.1 L79.4 706.1 L80.4 706.1 L81.4 706.1 L82.4 706.1 L83.4 706.1 L84.4 706.1 L85.4 705.7 L86.4 705.0 L87.4 705.0 L88.4 705.0 L89.4 705.0 L90.4 705.0 L91.4 705.0 L92.4 705.0 L93.4 705.0 L94.4 705.0 L95.4 705.0 L96.4 705.0 L97.4 705.0 L98.4 705.0 L99.4 705.0 L100.4 705.0 L101.4 705.0 L102.4 705.0 L103.4 705.0 L104.4 705.0 L105.4 705.0 L106.4 705.0 L107.4 705.0 L108.4 705.0 L109.4 705.0 L110.4 705.0 L111.4 705.0 L112.4 705.0 L113.4 705.0 L114.4 705.0 L115.4 705.0 L116.4 705.0 L117.4 705.0 L118.4 705.0 L119.4 705.0 L120.4 705.0 L121.4 705.0 L122.4 705.0 L123.4 705.0 L124.4 705.0 L125.4 705.0 L126.4 705.0 L127.4 705.0 L128.4 705.0 L129.4 705.0 L130.4 705.0 L131.4 705.0 L132.4 705.0 L133.4 705.0 L134.4 705.0 L135.4 705.0 L136.4 705.0 L137.4 705.0 L138.4 705.0 L139.4 705.3 L140.4 705.8 L141.4 706.1 L142.4 706.1 L143.4 706.1 L144.4 706.1 L145.4 706.1 L146.4 706.1 L147.4 706.1 L148.4 706.1 L149.4 706.1 L150.4 706.1 L151.4 706.1 L152.4 706.1 L153.4 706.1 L154.4 706.1 L155.4 706.1 L156.4 706.1 L157.4 706.1 L158.4 706.1 L159.4 706.1 L160.4 706.1 L161.4 706.1 L162.4 706.1 L163.4 706.1 L164.4 706.1 L165.4 706.1 L166.4 706.1 L167.4 706.1 L168.4 706.1 L169.4 706.1 L170.4 706.1 L171.4 706.1 L172.4 706.1 L173.4 706.1 L174.4 706.1 L175.4 706.1 L176.4 706.1 L177.4 706.1 L178.4 706.1 L179.4 706.1 L180.4 706.1 L181.4 706.1 L182.4 706.1 L183.4 706.1 L184.4 706.1 L185.4 706.1 L186.4 706.1 L187.4 706.1 L188.4 706.1 L189.4 706.1 L190.4 706.1 L191.4 706.1 L192.4 706.1 L193.4 706.1 L194.4 706.1 L195.4 706.1 L196.4 706.1 L197.4 706.1 L198.4 706.1 L199.4 706.1 L200.4 706.1 L201.4 706.1 L202.4 706.1 L203.4 706.1 L204.4 706.1 L205.4 706.1 L206.4 706.1 L207.4 706.1 L208.4 706.1 L209.4 706.3 L210.4 706.4 L211.4 706.5 L212.4 706.6 L213.4 706.8 L214.4 706.9 L215.4 707.0 L216.4 707.1 L217.4 707.3 L218.4 707.4 L219.4 707.5 L220.4 707.6 L221.4 707.8 L222.4 707.9 L223.4 708.0 L224.4 708.1 L225.4 708.3 L226.4 708.5 L227.4 708.7 L228.4 708.9 L229.4 709.1 L230.4 709.3 L231.4 709.5 L232.4 709.7 L233.4 709.9 L234.4 710.1 L235.4 710.3 L236.4 710.5 L237.4 710.7 L238.4 710.9 L239.4 711.1 L240.4 711.3 L241.4 711.5 L242.4 711.7 L243.4 711.9 L244.4 712.1 L245.4 712.3 L246.4 712.4 L247.4 712.2 L248.4 712.0 L249.4 711.9 L250.4 711.7 L251.4 711.5 L252.4 711.4 L253.4 711.2 L254.4 711.0 L255.4 710.9 L256.4 710.7 L257.4 710.5 L258.4 710.4 L259.4 710.2 L260.4 710.0 L261.4 709.9 L262.4 709.6 L263.4 709.2 L264.4 708.8 L265.4 708.4 L266.4 707.9 L267.4 707.5 L268.4 707.1 L269.4 706.7 L270.4 706.2 L271.4 705.8 L272.4 705.5 L273.4 705.5 L274.4 705.4 L275.4 705.3 L276.4 705.3 L277.4 705.2 L278.4 705.1 L279.4 705.0 L280.4 705.0 L281.4 704.9 L282.4 704.8 L283.4 704.8 L284.4 704.7 L285.4 704.6 L286.4 704.5 L287.4 704.5 L288.4 704.4 L289.4 704.3 L290.4 704.2 L291.4 704.2 L292.4 704.1 L293.4 704.0 L294.4 703.9 L295.4 703.8 L296.4 703.6 L297.4 703.4 L298.4 703.3 L299.4 703.1 L300.4 702.9 L301.4 702.8 L302.4 702.6 L303.4 702.4 L304.4 702.3 L305.4 702.1 L306.4 701.9 L307.4 701.8 L308.4 701.6 L309.4 701.5 L310.4 701.3 L311.4 701.2 L312.4 701.1 L313.4 701.0 L314.4 700.9 L315.4 700.8 L316.4 700.7 L317.4 700.6 L318.4 700.5 L319.4 700.4 L320.4 700.3 L321.4 700.3 L322.4 700.3 L323.4 700.3 L324.4 700.3 L325.4 700.3 L326.4 700.3 L327.4 700.3 L328.4 700.3 L329.4 700.3 L330.4 700.3 L331.4 700.3 L332.4 700.3 L333.4 700.3 L334.4 700.3 L334.4 858.4 L61.4 858.4 Z" fill="#fcfcfc"/><path d="M61.4 700.5 H335.1" stroke="rgba(36,41,46,0.12)" stroke-width="1"/><path d="M61.4 752.5 H335.1" stroke="rgba(36,41,46,0.12)" stroke-width="1"/><path d="M61.4 805.5 H335.1" stroke="rgba(36,41,46,0.12)" stroke-width="1"/><path d="M61.4 858.5 H335.1" stroke="rgba(36,41,46,0.12)" stroke-width="1"/><path d="M80.5 679.2 V862.4" stroke="rgba(36,41,46,0.12)" stroke-width="1"/><path d="M148.5 679.2 V862.4" stroke="rgba(36,41,46,0.12)" stroke-width="1"/><path d="M217.5 679.2 V862.4" stroke="rgba(36,41,46,0.12)" stroke-width="1"/><path d="M285.5 679.2 V862.4" stroke="rgba(36,41,46,0.12)" stroke-width="1"/><path d="M61.4 706.5 L62.4 706.5 L63.4 706.5 L64.4 706.5 L65.4 706.5 L66.4 706.5 L67.4 706.5 L68.4 706.5 L69.4 706.5 L70.4 706.5 L71.4 706.5 L72.4 706.5 L73.4 706.5 L74.4 706.5 L75.4 706.5 L76.4 706.5 L77.4 706.5 L78.4 706.5 L79.4 706.5 L80.4 706.5 L81.4 706.5 L82.4 706.5 L83.4 706.5 L84.4 706.5 L85.4 705.5 L86.4 705.5 L87.4 705.5 L88.4 705.5 L89.4 705.5 L90.4 705.5 L91.4 705.5 L92.4 705.5 L93.4 705.5 L94.4 705.5 L95.4 705.5 L96.4 705.5 L97.4 705.5 L98.4 705.5 L99.4 705.5 L100.4 705.5 L101.4 705.5 L102.4 705.5 L103.4 705.5 L104.4 705.5 L105.4 705.5 L106.4 705.5 L107.4 705.5 L108.4 705.5 L109.4 705.5 L110.4 705.5 L111.4 705.5 L112.4 705.5 L113.4 705.5 L114.4 705.5 L115.4 705.5 L116.4 705.5 L117.4 705.5 L118.4 705.5 L119.4 705.5 L120.4 705.5 L121.4 705.5 L122.4 705.5 L123.4 705.5 L124.4 705.5 L125.4 705.5 L126.4 705.5 L127.4 705.5 L128.4 705.5 L129.4 705.5 L130.4 705.5 L131.4 705.5 L132.4 705.5 L133.4 705.5 L134.4 705.5 L135.4 705.5 L136.4 705.5 L137.4 705.5 L138.4 705.5 L139.4 705.5 L140.4 705.5 L141.4 706.5 L142.4 706.5 L143.4 706.5 L144.4 706.5 L145.4 706.5 L146.4 706.5 L147.4 706.5 L148.4 706.5 L149.4 706.5 L150.4 706.5 L151.4 706.5 L152.4 706.5 L153.4 706.5 L154.4 706.5 L155.4 706.5 L156.4 706.5 L157.4 706.5 L158.4 706.5 L159.4 706.5 L160.4 706.5 L161.4 706.5 L162.4 706.5 L163.4 706.5 L164.4 706.5 L165.4 706.5 L166.4 706.5 L167.4 706.5 L168.4 706.5 L169.4 706.5 L170.4 706.5 L171.4 706.5 L172.4 706.5 L173.4 706.5 L174.4 706.5 L175.4 706.5 L176.4 706.5 L177.4 706.5 L178.4 706.5 L179.4 706.5 L180.4 706.5 L181.4 706.5 L182.4 706.5 L183.4 706.5 L184.4 706.5 L185.4 706.5 L186.4 706.5 L187.4 706.5 L188.4 706.5 L189.4 706.5 L190.4 706.5 L191.4 706.5 L192.4 706.5 L193.4 706.5 L194.4 706.5 L195.4 706.5 L196.4 706.5 L197.4 706.5 L198.4 706.5 L199.4 706.5 L200.4 706.5 L201.4 706.5 L202.4 706.5 L203.4 706.5 L204.4 706.5 L205.4 706.5 L206.4 706.5 L207.4 706.5 L208.4 706.5 L209.4 706.5 L210.4 706.5 L211.4 706.5 L212.4 706.5 L213.4 706.5 L214.4 706.5 L215.4 707.5 L216.4 707.5 L217.4 707.5 L218.4 707.5 L219.4 707.5 L220.4 707.5 L221.4 707.5 L222.4 707.5 L223.4 708.5 L224.4 708.5 L225.4 708.5 L226.4 708.5 L227.4 708.5 L228.4 708.5 L229.4 709.5 L230.4 709.5 L231.4 709.5 L232.4 709.5 L233.4 709.5 L234.4 710.5 L235.4 710.5 L236.4 710.5 L237.4 710.5 L238.4 710.5 L239.4 711.5 L240.4 711.5 L241.4 711.5 L242.4 711.5 L243.4 711.5 L244.4 712.5 L245.4 712.5 L246.4 712.5 L247.4 712.5 L248.4 712.5 L249.4 711.5 L250.4 711.5 L251.4 711.5 L252.4 711.5 L253.4 711.5 L254.4 711.5 L255.4 710.5 L256.4 710.5 L257.4 710.5 L258.4 710.5 L259.4 710.5 L260.4 710.5 L261.4 709.5 L262.4 709.5 L263.4 709.5 L264.4 708.5 L265.4 708.5 L266.4 707.5 L267.4 707.5 L268.4 707.5 L269.4 706.5 L270.4 706.5 L271.4 705.5 L272.4 705.5 L273.4 705.5 L274.4 705.5 L275.4 705.5 L276.4 705.5 L277.4 705.5 L278.4 705.5 L279.4 705.5 L280.4 704.5 L281.4 704.5 L282.4 704.5 L283.4 704.5 L284.4 704.5 L285.4 704.5 L286.4 704.5 L287.4 704.5 L288.4 704.5 L289.4 704.5 L290.4 704.5 L291.4 704.5 L292.4 704.5 L293.4 704.5 L294.4 703.5 L295.4 703.5 L296.4 703.5 L297.4 703.5 L298.4 703.5 L299.4 703.5 L300.4 702.5 L301.4 702.5 L302.4 702.5 L303.4 702.5 L304.4 702.5 L305.4 702.5 L306.4 701.5 L307.4 701.5 L308.4 701.5 L309.4 701.5 L310.4 701.5 L311.4 701.5 L312.4 701.5 L313.4 700.5 L314.4 700.5 L315.4 700.5 L316.4 700.5 L317.4 700.5 L318.4 700.5 L319.4 700.5 L320.4 700.5 L321.4 700.5 L322.4 700.5 L323.4 700.5 L324.4 700.5 L325.4 700.5 L326.4 700.5 L327.4 700.5 L328.4 700.5 L329.4 700.5 L330.4 700.5 L331.4 700.5 L332.4 700.5 L333.4 700.5 L334.4 700.5" stroke="#56a64b" stroke-width="1" fill="none" stroke-opacity="1" stroke-linejoin="round"/></svg>
<span class="t" style="left:29.60px;top:693.84px;font-size:12px;line-height:12px;color:#24292e;letter-spacing:0.500px">30 K</span>
<span class="t" style="left:29.60px;top:745.84px;font-size:12px;line-height:12px;color:#24292e;letter-spacing:0.500px">20 K</span>
<span class="t" style="left:29.60px;top:798.84px;font-size:12px;line-height:12px;color:#24292e;letter-spacing:0.500px">10 K</span>
<span class="t" style="left:48.68px;top:851.84px;font-size:12px;line-height:12px;color:#24292e;letter-spacing:0.000px">0</span>
<span class="t" style="left:65.10px;top:867.24px;font-size:12px;line-height:12px;color:#24292e;letter-spacing:-0.100px">17:30</span>
<span class="t" style="left:133.37px;top:867.24px;font-size:12px;line-height:12px;color:#24292e;letter-spacing:-0.100px">17:45</span>
<span class="t" style="left:201.64px;top:867.24px;font-size:12px;line-height:12px;color:#24292e;letter-spacing:-0.100px">18:00</span>
<span class="t" style="left:269.91px;top:867.24px;font-size:12px;line-height:12px;color:#24292e;letter-spacing:-0.100px">18:15</span>
<div class="a" style="left:360px;top:630px;width:336px;height:258px;background:#ffffff;border-radius:2px;border:1px solid #e3e5e7;box-sizing:border-box"></div>
<span class="t" style="left:368.80px;top:640.15px;font-size:14px;line-height:14px;color:#24292e;letter-spacing:0.583px;-webkit-text-stroke:0.25px #24292e">Oldest exemplar age</span>
<svg class="a" style="left:525.5px;top:640px;" width="14" height="14" viewBox="0 0 14 14"><circle cx="7" cy="7" r="6" stroke="#4a4e53" stroke-width="1.15" fill="none"/><path d="M7 6.4 V9.8" stroke="#4a4e53" stroke-width="1.3" stroke-linecap="round"/><circle cx="7" cy="4.3" r="0.8" fill="#4a4e53"/></svg>
<svg class="a" style="left:0;top:0" width="1400" height="1200" viewBox="0 0 1400 1200"><path d="M437.6 698.0 L438.9 698.1 L440.2 698.3 L441.5 698.4 L442.8 698.5 L444.1 698.5 L445.4 698.5 L446.7 698.5 L448.0 698.5 L449.3 698.5 L450.6 698.5 L451.9 698.5 L453.2 698.5 L454.5 698.5 L455.8 698.5 L457.1 698.5 L458.4 698.5 L459.7 698.5 L461.0 698.5 L462.3 698.5 L463.6 698.5 L464.9 698.5 L466.2 698.5 L467.5 698.5 L468.8 698.5 L470.1 698.5 L471.4 698.5 L472.7 698.5 L474.0 698.5 L475.3 698.5 L476.6 698.5 L477.9 698.5 L479.2 698.5 L480.5 698.5 L481.8 698.5 L483.1 698.5 L484.4 698.5 L485.7 698.5 L487.0 698.5 L488.3 698.5 L489.6 698.5 L490.9 698.5 L492.2 698.5 L493.5 698.5 L494.8 698.5 L496.1 698.5 L497.4 698.5 L498.7 698.5 L500.0 698.5 L501.3 698.5 L502.6 698.5 L503.9 698.5 L505.2 698.5 L506.5 698.5 L507.8 698.5 L509.1 698.5 L510.4 698.5 L511.7 698.5 L513.0 698.5 L514.3 698.3 L515.6 698.4 L516.9 698.8 L518.2 699.5 L519.5 699.6 L520.8 699.2 L522.1 699.5 L523.4 699.6 L524.7 699.7 L526.0 700.6 L527.3 700.2 L528.6 700.7 L529.9 700.8 L531.2 700.6 L532.5 701.1 L533.8 700.5 L535.1 701.0 L536.4 700.5 L537.7 700.8 L539.0 700.6 L540.3 700.6 L541.6 701.2 L542.9 701.1 L544.2 700.6 L545.5 701.1 L546.8 700.5 L548.1 700.6 L549.4 701.1 L550.7 700.9 L552.0 700.4 L553.3 701.1 L554.6 700.4 L555.9 700.5 L557.2 700.9 L558.5 700.5 L559.8 700.5 L561.1 700.2 L562.4 700.3 L563.7 700.7 L565.0 700.4 L566.3 700.7 L567.6 700.5 L568.9 700.5 L570.2 701.0 L571.5 700.5 L572.8 700.6 L574.1 700.9 L575.4 700.2 L576.7 700.2 L578.0 700.9 L579.3 700.8 L580.6 700.2 L581.9 700.2 L583.2 700.7 L584.5 700.8 L585.8 700.1 L587.1 700.8 L588.4 700.7 L589.7 700.5 L591.0 700.3 L592.3 700.0 L593.6 699.9 L594.9 700.8 L596.2 700.1 L597.5 700.5 L598.8 700.1 L600.1 700.6 L601.4 700.3 L602.7 700.0 L604.0 699.9 L605.3 700.4 L606.6 699.7 L607.9 699.8 L609.2 700.1 L610.5 700.3 L611.8 700.1 L613.1 699.7 L614.4 700.3 L615.7 699.6 L617.0 699.4 L618.3 699.6 L619.6 699.9 L620.9 699.7 L622.2 700.0 L623.5 700.3 L624.8 700.6 L626.1 700.4 L627.4 700.7 L628.7 701.3 L630.0 701.3 L631.3 701.1 L632.6 701.1 L633.9 701.0 L635.2 700.6 L636.5 700.5 L637.8 700.5 L639.1 701.3 L640.4 701.1 L641.7 701.4 L643.0 700.5 L644.3 701.1 L645.6 700.9 L646.9 701.2 L648.2 700.8 L649.5 701.4 L650.8 700.6 L652.1 701.0 L653.4 701.2 L654.7 701.3 L656.0 701.2 L657.3 701.2 L658.6 701.3 L659.9 701.4 L661.2 700.8 L662.5 701.0 L663.8 701.2 L665.1 701.1 L666.4 700.6 L667.7 700.9 L669.0 700.8 L670.3 700.5 L671.6 700.5 L672.9 700.2 L674.2 700.3 L675.5 700.2 L676.8 699.4 L678.1 699.6 L679.4 699.7 L679.4 858.4 L437.6 858.4 Z" fill="#fcfcfc"/><path d="M437.6 686.5 H679.5" stroke="rgba(36,41,46,0.12)" stroke-width="1"/><path d="M437.6 720.5 H679.5" stroke="rgba(36,41,46,0.12)" stroke-width="1"/><path d="M437.6 755.5 H679.5" stroke="rgba(36,41,46,0.12)" stroke-width="1"/><path d="M437.6 789.5 H679.5" stroke="rgba(36,41,46,0.12)" stroke-width="1"/><path d="M437.6 824.5 H679.5" stroke="rgba(36,41,46,0.12)" stroke-width="1"/><path d="M437.6 858.5 H679.5" stroke="rgba(36,41,46,0.12)" stroke-width="1"/><path d="M454.5 679.2 V862.4" stroke="rgba(36,41,46,0.12)" stroke-width="1"/><path d="M514.5 679.2 V862.4" stroke="rgba(36,41,46,0.12)" stroke-width="1"/><path d="M575.5 679.2 V862.4" stroke="rgba(36,41,46,0.12)" stroke-width="1"/><path d="M635.5 679.2 V862.4" stroke="rgba(36,41,46,0.12)" stroke-width="1"/><path d="M437.6 698.00 L438.9 698.15 L440.2 698.30 L441.5 698.44 L442.8 698.50 L444.1 698.50 L445.4 698.50 L446.7 698.50 L448.0 698.50 L449.3 698.50 L450.6 698.50 L451.9 698.50 L453.2 698.50 L454.5 698.50 L455.8 698.50 L457.1 698.50 L458.4 698.50 L459.7 698.50 L461.0 698.50 L462.3 698.50 L463.6 698.50 L464.9 698.50 L466.2 698.50 L467.5 698.50 L468.8 698.50 L470.1 698.50 L471.4 698.50 L472.7 698.50 L474.0 698.50 L475.3 698.50 L476.6 698.50 L477.9 698.50 L479.2 698.50 L480.5 698.50 L481.8 698.50 L483.1 698.50 L484.4 698.50 L485.7 698.50 L487.0 698.50 L488.3 698.50 L489.6 698.50 L490.9 698.50 L492.2 698.50 L493.5 698.50 L494.8 698.50 L496.1 698.50 L497.4 698.50 L498.7 698.50 L500.0 698.50 L501.3 698.50 L502.6 698.50 L503.9 698.50 L505.2 698.50 L506.5 698.50 L507.8 698.50 L509.1 698.50 L510.4 698.50 L511.7 698.50 L513.0 698.50 L514.3 698.34 L515.6 698.37 L516.9 698.78 L518.2 699.55 L519.5 699.56 L520.8 699.18 L522.1 699.49 L523.4 699.55 L524.7 699.71 L526.0 700.57 L527.3 700.20 L528.6 700.74 L529.9 700.84 L531.2 700.61 L532.5 701.09 L533.8 700.54 L535.1 700.99 L536.4 700.50 L537.7 700.76 L539.0 700.56 L540.3 700.60 L541.6 701.22 L542.9 701.06 L544.2 700.60 L545.5 701.11 L546.8 700.50 L548.1 700.65 L549.4 701.05 L550.7 700.85 L552.0 700.35 L553.3 701.14 L554.6 700.43 L555.9 700.46 L557.2 700.91 L558.5 700.50 L559.8 700.46 L561.1 700.25 L562.4 700.25 L563.7 700.69 L565.0 700.37 L566.3 700.68 L567.6 700.46 L568.9 700.52 L570.2 700.97 L571.5 700.53 L572.8 700.60 L574.1 700.85 L575.4 700.23 L576.7 700.19 L578.0 700.86 L579.3 700.76 L580.6 700.24 L581.9 700.18 L583.2 700.66 L584.5 700.83 L585.8 700.15 L587.1 700.82 L588.4 700.74 L589.7 700.48 L591.0 700.31 L592.3 700.01 L593.6 699.94 L594.9 700.76 L596.2 700.10 L597.5 700.51 L598.8 700.09 L600.1 700.59 L601.4 700.35 L602.7 700.04 L604.0 699.90 L605.3 700.35 L606.6 699.73 L607.9 699.84 L609.2 700.10 L610.5 700.33 L611.8 700.08 L613.1 699.74 L614.4 700.28 L615.7 699.60 L617.0 699.39 L618.3 699.63 L619.6 699.93 L620.9 699.72 L622.2 699.97 L623.5 700.29 L624.8 700.61 L626.1 700.36 L627.4 700.71 L628.7 701.25 L630.0 701.34 L631.3 701.05 L632.6 701.09 L633.9 700.99 L635.2 700.60 L636.5 700.51 L637.8 700.50 L639.1 701.30 L640.4 701.12 L641.7 701.36 L643.0 700.52 L644.3 701.07 L645.6 700.94 L646.9 701.17 L648.2 700.80 L649.5 701.42 L650.8 700.59 L652.1 701.02 L653.4 701.19 L654.7 701.34 L656.0 701.20 L657.3 701.17 L658.6 701.26 L659.9 701.37 L661.2 700.80 L662.5 701.03 L663.8 701.16 L665.1 701.06 L666.4 700.58 L667.7 700.85 L669.0 700.85 L670.3 700.52 L671.6 700.49 L672.9 700.21 L674.2 700.32 L675.5 700.19 L676.8 699.42 L678.1 699.64 L679.4 699.67" stroke="#56a64b" stroke-width="1" fill="none" stroke-opacity="1" stroke-linejoin="round"/></svg>
<span class="t" style="left:371.68px;top:679.84px;font-size:12px;line-height:12px;color:#24292e;letter-spacing:0.380px">1.39 hours</span>
<span class="t" style="left:372.74px;top:713.84px;font-size:12px;line-height:12px;color:#24292e;letter-spacing:0.373px">1.11 hours</span>
<span class="t" style="left:387.58px;top:748.84px;font-size:12px;line-height:12px;color:#24292e;letter-spacing:0.420px">50 mins</span>
<span class="t" style="left:376.98px;top:782.84px;font-size:12px;line-height:12px;color:#24292e;letter-spacing:0.390px">33.3 mins</span>
<span class="t" style="left:376.98px;top:817.84px;font-size:12px;line-height:12px;color:#24292e;letter-spacing:0.390px">16.7 mins</span>
<span class="t" style="left:415.14px;top:851.84px;font-size:12px;line-height:12px;color:#24292e;letter-spacing:0.480px">0 s</span>
<span class="t" style="left:439.00px;top:867.24px;font-size:12px;line-height:12px;color:#24292e;letter-spacing:-0.100px">17:30</span>
<span class="t" style="left:499.30px;top:867.24px;font-size:12px;line-height:12px;color:#24292e;letter-spacing:-0.100px">17:45</span>
<span class="t" style="left:559.60px;top:867.24px;font-size:12px;line-height:12px;color:#24292e;letter-spacing:-0.100px">18:00</span>
<span class="t" style="left:619.90px;top:867.24px;font-size:12px;line-height:12px;color:#24292e;letter-spacing:-0.100px">18:15</span>
<div class="a" style="left:704px;top:630px;width:336px;height:258px;background:#ffffff;border-radius:2px;border:1px solid #e3e5e7;box-sizing:border-box"></div>
<span class="t" style="left:712.80px;top:640.15px;font-size:14px;line-height:14px;color:#24292e;letter-spacing:0.659px;-webkit-text-stroke:0.25px #24292e">Native histogram series</span>
<svg class="a" style="left:890.5px;top:640px;" width="14" height="14" viewBox="0 0 14 14"><circle cx="7" cy="7" r="6" stroke="#4a4e53" stroke-width="1.15" fill="none"/><path d="M7 6.4 V9.8" stroke="#4a4e53" stroke-width="1.3" stroke-linecap="round"/><circle cx="7" cy="4.3" r="0.8" fill="#4a4e53"/></svg>
<svg class="a" style="left:0;top:0" width="1400" height="1200" viewBox="0 0 1400 1200"><path d="M754.0 692.2 L757.0 692.3 L760.0 692.5 L763.0 692.6 L766.0 692.7 L769.0 692.8 L772.0 692.6 L775.0 692.2 L778.0 691.8 L781.0 691.6 L784.0 691.6 L787.0 691.6 L790.0 691.6 L793.0 691.6 L796.0 691.6 L799.0 691.6 L802.0 691.7 L805.0 691.8 L808.0 691.9 L811.0 692.0 L814.0 692.2 L817.0 692.3 L820.0 692.4 L823.0 692.6 L826.0 692.7 L829.0 692.8 L832.0 693.1 L835.0 693.5 L838.0 693.9 L841.0 694.3 L844.0 694.7 L847.0 695.0 L850.0 695.2 L853.0 695.5 L856.0 695.7 L859.0 696.0 L862.0 696.2 L865.0 696.4 L868.0 696.7 L871.0 696.8 L874.0 696.8 L877.0 696.8 L880.0 696.8 L883.0 696.8 L886.0 696.7 L889.0 696.3 L892.0 695.9 L895.0 695.5 L898.0 695.5 L901.0 695.5 L904.0 695.5 L907.0 695.5 L910.0 695.5 L913.0 695.5 L916.0 695.5 L919.0 695.5 L922.0 695.5 L925.0 695.5 L928.0 695.5 L931.0 695.6 L934.0 696.0 L937.0 696.4 L940.0 696.8 L943.0 697.2 L946.0 697.5 L949.0 697.5 L952.0 697.5 L955.0 697.5 L958.0 697.5 L961.0 697.5 L964.0 697.5 L967.0 697.5 L970.0 697.5 L973.0 697.5 L976.0 697.5 L979.0 697.5 L982.0 697.5 L985.0 697.5 L988.0 697.5 L991.0 697.5 L994.0 697.5 L997.0 697.5 L1000.0 697.5 L1003.0 697.5 L1006.0 697.5 L1009.0 697.5 L1012.0 697.5 L1015.0 697.5 L1018.0 697.5 L1021.0 697.5 L1021.0 785.0 L754.0 785.0 Z" fill="#f9faf4"/><path d="M754.2 686.5 H1023.0" stroke="rgba(36,41,46,0.12)" stroke-width="1"/><path d="M754.2 719.5 H1023.0" stroke="rgba(36,41,46,0.12)" stroke-width="1"/><path d="M754.2 752.5 H1023.0" stroke="rgba(36,41,46,0.12)" stroke-width="1"/><path d="M754.2 784.5 H1023.0" stroke="rgba(36,41,46,0.12)" stroke-width="1"/><path d="M773.5 679.2 V789.0" stroke="rgba(36,41,46,0.12)" stroke-width="1"/><path d="M840.5 679.2 V789.0" stroke="rgba(36,41,46,0.12)" stroke-width="1"/><path d="M907.5 679.2 V789.0" stroke="rgba(36,41,46,0.12)" stroke-width="1"/><path d="M974.5 679.2 V789.0" stroke="rgba(36,41,46,0.12)" stroke-width="1"/><path d="M754.0 692.5 L757.0 692.5 L760.0 692.5 L763.0 692.5 L766.0 692.5 L769.0 692.5 L772.0 692.5 L775.0 692.5 L778.0 691.5 L781.0 691.5 L784.0 691.5 L787.0 691.5 L790.0 691.5 L793.0 691.5 L796.0 691.5 L799.0 691.5 L802.0 691.5 L805.0 691.5 L808.0 691.5 L811.0 692.5 L814.0 692.5 L817.0 692.5 L820.0 692.5 L823.0 692.5 L826.0 692.5 L829.0 692.5 L832.0 693.5 L835.0 693.5 L838.0 693.5 L841.0 694.5 L844.0 694.5 L847.0 695.5 L850.0 695.5 L853.0 695.5 L856.0 695.5 L859.0 695.5 L862.0 696.5 L865.0 696.5 L868.0 696.5 L871.0 696.5 L874.0 696.5 L877.0 696.5 L880.0 696.5 L883.0 696.5 L886.0 696.5 L889.0 696.5 L892.0 695.5 L895.0 695.5 L898.0 695.5 L901.0 695.5 L904.0 695.5 L907.0 695.5 L910.0 695.5 L913.0 695.5 L916.0 695.5 L919.0 695.5 L922.0 695.5 L925.0 695.5 L928.0 695.5 L931.0 695.5 L934.0 696.5 L937.0 696.5 L940.0 696.5 L943.0 697.5 L946.0 697.5 L949.0 697.5 L952.0 697.5 L955.0 697.5 L958.0 697.5 L961.0 697.5 L964.0 697.5 L967.0 697.5 L970.0 697.5 L973.0 697.5 L976.0 697.5 L979.0 697.5 L982.0 697.5 L985.0 697.5 L988.0 697.5 L991.0 697.5 L994.0 697.5 L997.0 697.5 L1000.0 697.5 L1003.0 697.5 L1006.0 697.5 L1009.0 697.5 L1012.0 697.5 L1015.0 697.5 L1018.0 697.5 L1021.0 697.5" stroke="#56a64b" stroke-width="1.2" fill="none" stroke-opacity="1" stroke-linejoin="round"/><path d="M754.0 694.5 L757.0 694.5 L760.0 694.5 L763.0 694.5 L766.0 694.5 L769.0 694.5 L772.0 694.5 L775.0 694.5 L778.0 694.5 L781.0 694.5 L784.0 693.5 L787.0 693.5 L790.0 693.5 L793.0 693.5 L796.0 693.5 L799.0 693.5 L802.0 693.5 L805.0 693.5 L808.0 694.5 L811.0 694.5 L814.0 694.5 L817.0 694.5 L820.0 694.5 L823.0 694.5 L826.0 695.5 L829.0 695.5 L832.0 695.5 L835.0 695.5 L838.0 696.5 L841.0 696.5 L844.0 696.5 L847.0 696.5 L850.0 697.5 L853.0 697.5 L856.0 697.5 L859.0 697.5 L862.0 698.5 L865.0 698.5 L868.0 698.5 L871.0 698.5 L874.0 698.5 L877.0 698.5 L880.0 698.5 L883.0 698.5 L886.0 698.5 L889.0 697.5 L892.0 697.5 L895.0 697.5 L898.0 697.5 L901.0 696.5 L904.0 696.5 L907.0 696.5 L910.0 696.5 L913.0 696.5 L916.0 696.5 L919.0 696.5 L922.0 696.5 L925.0 696.5 L928.0 696.5 L931.0 696.5 L934.0 696.5 L937.0 697.5 L940.0 697.5 L943.0 697.5 L946.0 698.5 L949.0 698.5 L952.0 698.5 L955.0 698.5 L958.0 698.5 L961.0 698.5 L964.0 698.5 L967.0 699.5 L970.0 699.5 L973.0 699.5 L976.0 699.5 L979.0 699.5 L982.0 699.5 L985.0 699.5 L988.0 699.5 L991.0 699.5 L994.0 699.5 L997.0 699.5 L1000.0 699.5 L1003.0 699.5 L1006.0 699.5 L1009.0 699.5 L1012.0 699.5 L1015.0 699.5 L1018.0 698.5 L1021.0 698.5" stroke="#e6b800" stroke-width="1.2" fill="none" stroke-opacity="1" stroke-linejoin="round"/><path d="M754.0 720.5 L757.0 720.5 L760.0 720.5 L763.0 720.5 L766.0 720.5 L769.0 719.5 L772.0 719.5 L775.0 719.5 L778.0 719.5 L781.0 719.5 L784.0 719.5 L787.0 719.5 L790.0 719.5 L793.0 719.5 L796.0 719.5 L799.0 719.5 L802.0 719.5 L805.0 719.5 L808.0 719.5 L811.0 719.5 L814.0 719.5 L817.0 719.5 L820.0 719.5 L823.0 719.5 L826.0 719.5 L829.0 719.5 L832.0 719.5 L835.0 719.5 L838.0 720.5 L841.0 720.5 L844.0 720.5 L847.0 720.5 L850.0 720.5 L853.0 720.5 L856.0 720.5 L859.0 720.5 L862.0 720.5 L865.0 720.5 L868.0 720.5 L871.0 720.5 L874.0 720.5 L877.0 720.5 L880.0 720.5 L883.0 720.5 L886.0 720.5 L889.0 720.5 L892.0 720.5 L895.0 720.5 L898.0 720.5 L901.0 720.5 L904.0 720.5 L907.0 720.5 L910.0 720.5 L913.0 720.5 L916.0 719.5 L919.0 719.5 L922.0 719.5 L925.0 719.5 L928.0 719.5 L931.0 719.5 L934.0 719.5 L937.0 719.5 L940.0 719.5 L943.0 720.5 L946.0 720.5 L949.0 720.5 L952.0 720.5 L955.0 720.5 L958.0 720.5 L961.0 720.5 L964.0 720.5 L967.0 720.5 L970.0 720.5 L973.0 720.5 L976.0 720.5 L979.0 720.5 L982.0 720.5 L985.0 720.5 L988.0 721.5 L991.0 721.5 L994.0 721.5 L997.0 721.5 L1000.0 721.5 L1003.0 721.5 L1006.0 721.5 L1009.0 721.5 L1012.0 721.5 L1015.0 721.5 L1018.0 721.5 L1021.0 721.5" stroke="#3f8f3a" stroke-width="1.2" fill="none" stroke-opacity="1" stroke-linejoin="round"/><path d="M754.2 779.5 H1023.0" stroke="#6ed0e0" stroke-width="1"/><path d="M754.2 778.5 H1023.0" stroke="#8f2b2b" stroke-width="1.2"/><path d="M754.2 782.5 H1023.0" stroke="#56a64b" stroke-width="1"/><path d="M754.2 783.5 H1023.0" stroke="#c9a0dc" stroke-width="1"/><path d="M754.2 784.5 H1023.0" stroke="#e6a800" stroke-width="1.2"/><path d="M754.2 785.5 H1023.0" stroke="#b877d9" stroke-width="1"/></svg>
<span class="t" style="left:716.34px;top:679.84px;font-size:12px;line-height:12px;color:#24292e;letter-spacing:0.465px">150 K</span>
<span class="t" style="left:716.34px;top:712.84px;font-size:12px;line-height:12px;color:#24292e;letter-spacing:0.465px">100 K</span>
<span class="t" style="left:722.70px;top:745.84px;font-size:12px;line-height:12px;color:#24292e;letter-spacing:0.500px">50 K</span>
<span class="t" style="left:741.78px;top:777.84px;font-size:12px;line-height:12px;color:#24292e;letter-spacing:0.000px">0</span>
<span class="t" style="left:757.90px;top:793.84px;font-size:12px;line-height:12px;color:#24292e;letter-spacing:-0.100px">17:30</span>
<span class="t" style="left:824.90px;top:793.84px;font-size:12px;line-height:12px;color:#24292e;letter-spacing:-0.100px">17:45</span>
<span class="t" style="left:891.90px;top:793.84px;font-size:12px;line-height:12px;color:#24292e;letter-spacing:-0.100px">18:00</span>
<span class="t" style="left:958.90px;top:793.84px;font-size:12px;line-height:12px;color:#24292e;letter-spacing:-0.100px">18:15</span>
<div class="a" style="left:717px;top:818px;width:14px;height:4px;background:#56a64b;border-radius:2px"></div>
<span class="t" style="left:739.00px;top:814.24px;font-size:12px;line-height:12px;color:#24292e;letter-spacing:0.400px">active</span>
<div class="a" style="left:783.5px;top:818px;width:14px;height:4px;background:#e0b400;border-radius:2px"></div>
<span class="t" style="left:805.50px;top:814.24px;font-size:12px;line-height:12px;color:#24292e;letter-spacing:0.420px">active (asserts/input-series)</span>
<div class="a" style="left:717px;top:841px;width:14px;height:4px;background:#5794f2;border-radius:2px"></div>
<span class="t" style="left:739.00px;top:837.24px;font-size:12px;line-height:12px;color:#24292e;letter-spacing:0.428px">active (asserts/metrics)</span>
<div class="a" style="left:717px;top:865px;width:14px;height:4px;background:#ff780a;border-radius:2px"></div>
<span class="t" style="left:739.00px;top:861.24px;font-size:12px;line-height:12px;color:#24292e;letter-spacing:0.461px">active (grafanacloud_usage_group/team_alerting)</span>
<div class="a" style="left:1048px;top:630px;width:336px;height:258px;background:#ffffff;border-radius:2px;border:1px solid #e3e5e7;box-sizing:border-box"></div>
<span class="t" style="left:1056.80px;top:640.15px;font-size:14px;line-height:14px;color:#24292e;letter-spacing:0.653px;-webkit-text-stroke:0.25px #24292e">Total number of buckets used by na...</span>
<svg class="a" style="left:1335.5px;top:640px;" width="14" height="14" viewBox="0 0 14 14"><circle cx="7" cy="7" r="6" stroke="#4a4e53" stroke-width="1.15" fill="none"/><path d="M7 6.4 V9.8" stroke="#4a4e53" stroke-width="1.3" stroke-linecap="round"/><circle cx="7" cy="4.3" r="0.8" fill="#4a4e53"/></svg>
<svg class="a" style="left:0;top:0" width="1400" height="1200" viewBox="0 0 1400 1200"><path d="M1094.0 692.9 L1097.0 692.8 L1100.0 692.7 L1103.0 692.7 L1106.0 692.6 L1109.0 692.5 L1112.0 692.5 L1115.0 692.4 L1118.0 692.4 L1121.0 692.3 L1124.0 692.3 L1127.0 692.2 L1130.0 692.2 L1133.0 692.1 L1136.0 692.1 L1139.0 692.0 L1142.0 692.0 L1145.0 691.9 L1148.0 691.9 L1151.0 691.9 L1154.0 691.9 L1157.0 691.9 L1160.0 692.0 L1163.0 692.0 L1166.0 692.0 L1169.0 692.0 L1172.0 692.1 L1175.0 692.1 L1178.0 692.1 L1181.0 692.2 L1184.0 692.2 L1187.0 692.2 L1190.0 692.3 L1193.0 692.3 L1196.0 692.3 L1199.0 692.3 L1202.0 692.3 L1205.0 692.3 L1208.0 692.3 L1211.0 692.3 L1214.0 692.2 L1217.0 692.2 L1220.0 692.2 L1223.0 692.2 L1226.0 692.1 L1229.0 692.1 L1232.0 692.1 L1235.0 692.1 L1238.0 692.0 L1241.0 692.0 L1244.0 692.0 L1247.0 692.0 L1250.0 691.9 L1253.0 691.9 L1256.0 691.9 L1259.0 691.9 L1262.0 691.9 L1265.0 692.0 L1268.0 692.1 L1271.0 692.1 L1274.0 692.2 L1277.0 692.3 L1280.0 692.4 L1283.0 692.4 L1286.0 692.5 L1289.0 692.6 L1292.0 692.7 L1295.0 692.7 L1298.0 692.8 L1301.0 692.9 L1304.0 692.9 L1307.0 692.9 L1310.0 692.9 L1313.0 692.9 L1316.0 692.9 L1319.0 692.9 L1322.0 692.9 L1325.0 692.9 L1328.0 692.9 L1331.0 692.9 L1334.0 692.9 L1337.0 692.9 L1340.0 692.9 L1343.0 692.9 L1346.0 692.9 L1349.0 692.9 L1352.0 692.9 L1355.0 692.9 L1358.0 692.9 L1361.0 692.9 L1364.0 692.9 L1367.0 692.9 L1367.0 785.0 L1094.0 785.0 Z" fill="#f9faf4"/><path d="M1094.0 684.5 H1367.0" stroke="rgba(36,41,46,0.12)" stroke-width="1"/><path d="M1094.0 734.5 H1367.0" stroke="rgba(36,41,46,0.12)" stroke-width="1"/><path d="M1094.0 784.5 H1367.0" stroke="rgba(36,41,46,0.12)" stroke-width="1"/><path d="M1113.5 679.2 V789.0" stroke="rgba(36,41,46,0.12)" stroke-width="1"/><path d="M1181.5 679.2 V789.0" stroke="rgba(36,41,46,0.12)" stroke-width="1"/><path d="M1250.5 679.2 V789.0" stroke="rgba(36,41,46,0.12)" stroke-width="1"/><path d="M1318.5 679.2 V789.0" stroke="rgba(36,41,46,0.12)" stroke-width="1"/><path d="M1094.0 692.5 L1097.0 692.5 L1100.0 692.5 L1103.0 692.5 L1106.0 692.5 L1109.0 692.5 L1112.0 692.5 L1115.0 692.5 L1118.0 692.5 L1121.0 692.5 L1124.0 692.5 L1127.0 692.5 L1130.0 692.5 L1133.0 692.5 L1136.0 692.5 L1139.0 692.5 L1142.0 691.5 L1145.0 691.5 L1148.0 691.5 L1151.0 691.5 L1154.0 691.5 L1157.0 691.5 L1160.0 691.5 L1163.0 691.5 L1166.0 692.5 L1169.0 692.5 L1172.0 692.5 L1175.0 692.5 L1178.0 692.5 L1181.0 692.5 L1184.0 692.5 L1187.0 692.5 L1190.0 692.5 L1193.0 692.5 L1196.0 692.5 L1199.0 692.5 L1202.0 692.5 L1205.0 692.5 L1208.0 692.5 L1211.0 692.5 L1214.0 692.5 L1217.0 692.5 L1220.0 692.5 L1223.0 692.5 L1226.0 692.5 L1229.0 692.5 L1232.0 692.5 L1235.0 692.5 L1238.0 692.5 L1241.0 692.5 L1244.0 691.5 L1247.0 691.5 L1250.0 691.5 L1253.0 691.5 L1256.0 691.5 L1259.0 691.5 L1262.0 691.5 L1265.0 691.5 L1268.0 692.5 L1271.0 692.5 L1274.0 692.5 L1277.0 692.5 L1280.0 692.5 L1283.0 692.5 L1286.0 692.5 L1289.0 692.5 L1292.0 692.5 L1295.0 692.5 L1298.0 692.5 L1301.0 692.5 L1304.0 692.5 L1307.0 692.5 L1310.0 692.5 L1313.0 692.5 L1316.0 692.5 L1319.0 692.5 L1322.0 692.5 L1325.0 692.5 L1328.0 692.5 L1331.0 692.5 L1334.0 692.5 L1337.0 692.5 L1340.0 692.5 L1343.0 692.5 L1346.0 692.5 L1349.0 692.5 L1352.0 692.5 L1355.0 692.5 L1358.0 692.5 L1361.0 692.5 L1364.0 692.5 L1367.0 692.5" stroke="#56a64b" stroke-width="1.2" fill="none" stroke-opacity="1" stroke-linejoin="round"/><path d="M1094.0 694.5 L1097.0 694.5 L1100.0 694.5 L1103.0 694.5 L1106.0 694.5 L1109.0 694.5 L1112.0 694.5 L1115.0 694.5 L1118.0 694.5 L1121.0 694.5 L1124.0 694.5 L1127.0 693.5 L1130.0 693.5 L1133.0 693.5 L1136.0 693.5 L1139.0 693.5 L1142.0 693.5 L1145.0 693.5 L1148.0 694.5 L1151.0 694.5 L1154.0 694.5 L1157.0 694.5 L1160.0 694.5 L1163.0 694.5 L1166.0 694.5 L1169.0 694.5 L1172.0 694.5 L1175.0 694.5 L1178.0 694.5 L1181.0 694.5 L1184.0 694.5 L1187.0 694.5 L1190.0 694.5 L1193.0 694.5 L1196.0 694.5 L1199.0 694.5 L1202.0 694.5 L1205.0 694.5 L1208.0 694.5 L1211.0 694.5 L1214.0 694.5 L1217.0 694.5 L1220.0 694.5 L1223.0 694.5 L1226.0 694.5 L1229.0 694.5 L1232.0 694.5 L1235.0 694.5 L1238.0 694.5 L1241.0 694.5 L1244.0 694.5 L1247.0 694.5 L1250.0 694.5 L1253.0 694.5 L1256.0 694.5 L1259.0 694.5 L1262.0 694.5 L1265.0 694.5 L1268.0 694.5 L1271.0 694.5 L1274.0 694.5 L1277.0 694.5 L1280.0 694.5 L1283.0 694.5 L1286.0 694.5 L1289.0 694.5 L1292.0 694.5 L1295.0 694.5 L1298.0 694.5 L1301.0 694.5 L1304.0 694.5 L1307.0 694.5 L1310.0 694.5 L1313.0 694.5 L1316.0 694.5 L1319.0 694.5 L1322.0 694.5 L1325.0 694.5 L1328.0 694.5 L1331.0 694.5 L1334.0 694.5 L1337.0 694.5 L1340.0 694.5 L1343.0 694.5 L1346.0 694.5 L1349.0 694.5 L1352.0 694.5 L1355.0 694.5 L1358.0 694.5 L1361.0 694.5 L1364.0 694.5 L1367.0 694.5" stroke="#e6b800" stroke-width="1.2" fill="none" stroke-opacity="1" stroke-linejoin="round"/><path d="M1094.0 717.5 L1097.0 717.5 L1100.0 717.5 L1103.0 717.5 L1106.0 717.5 L1109.0 717.5 L1112.0 716.5 L1115.0 716.5 L1118.0 716.5 L1121.0 716.5 L1124.0 716.5 L1127.0 716.5 L1130.0 716.5 L1133.0 716.5 L1136.0 716.5 L1139.0 716.5 L1142.0 716.5 L1145.0 716.5 L1148.0 716.5 L1151.0 716.5 L1154.0 716.5 L1157.0 716.5 L1160.0 716.5 L1163.0 716.5 L1166.0 716.5 L1169.0 716.5 L1172.0 716.5 L1175.0 716.5 L1178.0 717.5 L1181.0 717.5 L1184.0 717.5 L1187.0 716.5 L1190.0 716.5 L1193.0 716.5 L1196.0 716.5 L1199.0 716.5 L1202.0 716.5 L1205.0 716.5 L1208.0 716.5 L1211.0 716.5 L1214.0 716.5 L1217.0 716.5 L1220.0 716.5 L1223.0 716.5 L1226.0 716.5 L1229.0 716.5 L1232.0 716.5 L1235.0 716.5 L1238.0 716.5 L1241.0 716.5 L1244.0 716.5 L1247.0 716.5 L1250.0 716.5 L1253.0 716.5 L1256.0 716.5 L1259.0 716.5 L1262.0 716.5 L1265.0 716.5 L1268.0 716.5 L1271.0 716.5 L1274.0 716.5 L1277.0 716.5 L1280.0 716.5 L1283.0 716.5 L1286.0 716.5 L1289.0 716.5 L1292.0 716.5 L1295.0 716.5 L1298.0 717.5 L1301.0 717.5 L1304.0 717.5 L1307.0 717.5 L1310.0 717.5 L1313.0 717.5 L1316.0 717.5 L1319.0 717.5 L1322.0 717.5 L1325.0 717.5 L1328.0 717.5 L1331.0 717.5 L1334.0 717.5 L1337.0 717.5 L1340.0 717.5 L1343.0 717.5 L1346.0 717.5 L1349.0 717.5 L1352.0 717.5 L1355.0 717.5 L1358.0 717.5 L1361.0 717.5 L1364.0 717.5 L1367.0 717.5" stroke="#3f8f3a" stroke-width="1.2" fill="none" stroke-opacity="1" stroke-linejoin="round"/><path d="M1094.0 778.5 H1367.0" stroke="#4f86d9" stroke-width="1"/><path d="M1094.0 780.5 H1367.0" stroke="#56a64b" stroke-width="1"/><path d="M1094.0 781.5 H1367.0" stroke="#e6b800" stroke-width="1"/><path d="M1094.0 782.5 H1367.0" stroke="#c4162a" stroke-width="1"/><path d="M1094.0 783.5 H1367.0" stroke="#e07fa0" stroke-width="1"/><path d="M1094.0 784.5 H1367.0" stroke="#6aa5d8" stroke-width="1.2"/><path d="M1094.0 785.5 H1367.0" stroke="#b8a0e0" stroke-width="1"/></svg>
<span class="t" style="left:1062.90px;top:677.84px;font-size:12px;line-height:12px;color:#24292e;letter-spacing:0.375px">2 Mil</span>
<span class="t" style="left:1062.90px;top:727.84px;font-size:12px;line-height:12px;color:#24292e;letter-spacing:0.375px">1 Mil</span>
<span class="t" style="left:1081.98px;top:777.84px;font-size:12px;line-height:12px;color:#24292e;letter-spacing:0.000px">0</span>
<span class="t" style="left:1098.00px;top:793.84px;font-size:12px;line-height:12px;color:#24292e;letter-spacing:-0.100px">17:30</span>
<span class="t" style="left:1166.30px;top:793.84px;font-size:12px;line-height:12px;color:#24292e;letter-spacing:-0.100px">17:45</span>
<span class="t" style="left:1234.60px;top:793.84px;font-size:12px;line-height:12px;color:#24292e;letter-spacing:-0.100px">18:00</span>
<span class="t" style="left:1302.90px;top:793.84px;font-size:12px;line-height:12px;color:#24292e;letter-spacing:-0.100px">18:15</span>
<div class="a" style="left:1061px;top:818px;width:14px;height:4px;background:#56a64b;border-radius:2px"></div>
<span class="t" style="left:1083.00px;top:814.24px;font-size:12px;line-height:12px;color:#24292e;letter-spacing:0.547px">buckets</span>
<div class="a" style="left:1139px;top:818px;width:14px;height:4px;background:#e0b400;border-radius:2px"></div>
<span class="t" style="left:1161.00px;top:814.24px;font-size:12px;line-height:12px;color:#24292e;letter-spacing:0.433px">buckets (asserts/input-series)</span>
<div class="a" style="left:1061px;top:841px;width:14px;height:4px;background:#5794f2;border-radius:2px"></div>
<span class="t" style="left:1083.00px;top:837.24px;font-size:12px;line-height:12px;color:#24292e;letter-spacing:0.443px">buckets (asserts/metrics)</span>
<div class="a" style="left:1049px;top:850px;width:327px;height:30px;overflow:hidden">
<div class="a" style="left:12px;top:15px;width:14px;height:4px;background:#ff780a;border-radius:2px"></div>
<span class="t" style="left:34.00px;top:11.24px;font-size:12px;line-height:12px;color:#24292e;letter-spacing:0.468px">buckets (grafanacloud_usage_group/team_alerting)</span>
</div>
<div class="a" style="left:16px;top:934px;width:336px;height:258px;background:#ffffff;border-radius:2px;border:1px solid #e3e5e7;box-sizing:border-box"></div>
<span class="t" style="left:24.80px;top:944.15px;font-size:14px;line-height:14px;color:#24292e;letter-spacing:0.712px;-webkit-text-stroke:0.25px #24292e">Distributor requests incoming rate</span>
<svg class="a" style="left:274.5px;top:944px;" width="14" height="14" viewBox="0 0 14 14"><circle cx="7" cy="7" r="6" stroke="#4a4e53" stroke-width="1.15" fill="none"/><path d="M7 6.4 V9.8" stroke="#4a4e53" stroke-width="1.3" stroke-linecap="round"/><circle cx="7" cy="4.3" r="0.8" fill="#4a4e53"/></svg>
<svg class="a" style="left:0;top:0" width="1400" height="1200" viewBox="0 0 1400 1200"><path d="M69.6 1007.2 L70.9 1008.1 L72.2 1008.3 L73.5 1008.3 L74.8 1008.3 L76.1 1009.2 L77.4 1009.5 L78.7 1009.4 L80.0 1009.6 L81.3 1009.6 L82.6 1009.5 L83.9 1010.2 L85.2 1010.8 L86.5 1010.4 L87.8 1011.6 L89.1 1011.3 L90.4 1011.7 L91.7 1011.8 L93.0 1013.3 L94.3 1013.4 L95.6 1013.9 L96.9 1014.0 L98.2 1013.6 L99.5 1014.4 L100.8 1014.9 L102.1 1014.9 L103.4 1016.2 L104.7 1015.9 L106.0 1016.0 L107.3 1017.2 L108.6 1016.7 L109.9 1018.1 L111.2 1017.9 L112.5 1018.3 L113.8 1018.5 L115.1 1019.0 L116.4 1019.0 L117.7 1019.2 L119.0 1020.6 L120.3 1020.2 L121.6 1021.2 L122.9 1020.9 L124.2 1022.2 L125.5 1022.5 L126.8 1022.7 L128.1 1023.1 L129.4 1023.2 L130.7 1023.8 L132.0 1023.4 L133.3 1024.2 L134.6 1025.0 L135.9 1024.6 L137.2 1025.7 L138.5 1025.9 L139.8 1025.5 L141.1 1025.7 L142.4 1026.0 L143.7 1026.1 L145.0 1027.1 L146.3 1026.6 L147.6 1026.4 L148.9 1026.7 L150.2 1027.6 L151.5 1028.2 L152.8 1027.8 L154.1 1028.0 L155.4 1028.2 L156.7 1028.6 L158.0 1028.1 L159.3 1028.7 L160.6 1028.8 L161.9 1029.0 L163.2 1028.6 L164.5 1028.7 L165.8 1029.1 L167.1 1029.9 L168.4 1029.3 L169.7 1029.8 L171.0 1029.6 L172.3 1029.5 L173.6 1029.6 L174.9 1030.6 L176.2 1030.7 L177.5 1030.3 L178.8 1030.9 L180.1 1031.0 L181.4 1031.4 L182.7 1031.6 L184.0 1031.1 L185.3 1031.9 L186.6 1032.0 L187.9 1031.7 L189.2 1032.2 L190.5 1031.9 L191.8 1031.9 L193.1 1031.8 L194.4 1032.7 L195.7 1032.0 L197.0 1032.0 L198.3 1033.1 L199.6 1033.2 L200.9 1033.0 L202.2 1033.5 L203.5 1032.7 L204.8 1033.1 L206.1 1033.3 L207.4 1033.6 L208.7 1033.4 L210.0 1033.4 L211.3 1033.9 L212.6 1034.7 L213.9 1034.9 L215.2 1034.8 L216.5 1034.6 L217.8 1034.5 L219.1 1035.5 L220.4 1035.1 L221.7 1035.4 L223.0 1034.6 L224.3 1034.9 L225.6 1035.7 L226.9 1035.8 L228.2 1035.9 L229.5 1035.7 L230.8 1035.5 L232.1 1035.8 L233.4 1036.2 L234.7 1035.6 L236.0 1036.0 L237.3 1038.3 L238.6 1046.1 L239.9 1030.4 L241.2 1016.5 L242.5 1021.0 L243.8 1027.4 L245.1 1035.1 L246.4 1035.3 L247.7 1035.7 L249.0 1035.6 L250.3 1035.3 L251.6 1035.7 L252.9 1036.5 L254.2 1036.6 L255.5 1035.8 L256.8 1035.9 L258.1 1036.1 L259.4 1036.1 L260.7 1036.8 L262.0 1036.6 L263.3 1037.6 L264.6 1037.5 L265.9 1037.0 L267.2 1037.7 L268.5 1037.6 L269.8 1037.9 L271.1 1037.8 L272.4 1037.9 L273.7 1038.0 L275.0 1038.4 L276.3 1039.0 L277.6 1038.9 L278.9 1038.5 L280.2 1039.4 L281.5 1039.8 L282.8 1039.8 L284.1 1040.0 L285.4 1039.2 L286.7 1039.9 L288.0 1039.5 L289.3 1040.5 L290.6 1039.9 L291.9 1040.6 L293.2 1040.1 L294.5 1040.8 L295.8 1040.4 L297.1 1040.2 L298.4 1040.7 L299.7 1040.7 L301.0 1041.5 L302.3 1040.8 L303.6 1041.2 L304.9 1041.3 L306.2 1041.9 L307.5 1041.0 L308.8 1041.7 L310.1 1041.7 L311.4 1042.0 L312.7 1042.4 L314.0 1041.7 L315.3 1042.3 L316.6 1042.1 L317.9 1042.3 L319.2 1041.8 L320.5 1042.8 L321.8 1043.1 L323.1 1042.4 L324.4 1042.5 L325.7 1043.4 L327.0 1042.4 L328.3 1042.4 L331.0 1087.0 L331.0 1162.4 L69.6 1162.4 Z" fill="#fcfcfc"/><path d="M69.6 1002.5 H335.6" stroke="rgba(36,41,46,0.12)" stroke-width="1"/><path d="M69.6 1034.5 H335.6" stroke="rgba(36,41,46,0.12)" stroke-width="1"/><path d="M69.6 1066.5 H335.6" stroke="rgba(36,41,46,0.12)" stroke-width="1"/><path d="M69.6 1098.5 H335.6" stroke="rgba(36,41,46,0.12)" stroke-width="1"/><path d="M69.6 1130.5 H335.6" stroke="rgba(36,41,46,0.12)" stroke-width="1"/><path d="M69.6 1162.5 H335.6" stroke="rgba(36,41,46,0.12)" stroke-width="1"/><path d="M87.5 983.6 V1166.4" stroke="rgba(36,41,46,0.12)" stroke-width="1"/><path d="M154.5 983.6 V1166.4" stroke="rgba(36,41,46,0.12)" stroke-width="1"/><path d="M220.5 983.6 V1166.4" stroke="rgba(36,41,46,0.12)" stroke-width="1"/><path d="M287.5 983.6 V1166.4" stroke="rgba(36,41,46,0.12)" stroke-width="1"/><path d="M69.6 1007.20 L70.9 1008.08 L72.2 1008.27 L73.5 1008.34 L74.8 1008.28 L76.1 1009.22 L77.4 1009.49 L78.7 1009.39 L80.0 1009.64 L81.3 1009.57 L82.6 1009.54 L83.9 1010.24 L85.2 1010.75 L86.5 1010.39 L87.8 1011.58 L89.1 1011.28 L90.4 1011.65 L91.7 1011.79 L93.0 1013.31 L94.3 1013.37 L95.6 1013.91 L96.9 1013.97 L98.2 1013.64 L99.5 1014.37 L100.8 1014.94 L102.1 1014.85 L103.4 1016.23 L104.7 1015.90 L106.0 1016.01 L107.3 1017.18 L108.6 1016.72 L109.9 1018.06 L111.2 1017.86 L112.5 1018.35 L113.8 1018.47 L115.1 1019.01 L116.4 1019.02 L117.7 1019.22 L119.0 1020.58 L120.3 1020.20 L121.6 1021.22 L122.9 1020.91 L124.2 1022.19 L125.5 1022.47 L126.8 1022.68 L128.1 1023.06 L129.4 1023.21 L130.7 1023.76 L132.0 1023.40 L133.3 1024.20 L134.6 1024.99 L135.9 1024.61 L137.2 1025.71 L138.5 1025.88 L139.8 1025.52 L141.1 1025.69 L142.4 1026.01 L143.7 1026.15 L145.0 1027.09 L146.3 1026.58 L147.6 1026.37 L148.9 1026.66 L150.2 1027.63 L151.5 1028.17 L152.8 1027.80 L154.1 1028.00 L155.4 1028.21 L156.7 1028.58 L158.0 1028.09 L159.3 1028.69 L160.6 1028.77 L161.9 1028.99 L163.2 1028.59 L164.5 1028.72 L165.8 1029.07 L167.1 1029.90 L168.4 1029.34 L169.7 1029.78 L171.0 1029.57 L172.3 1029.46 L173.6 1029.56 L174.9 1030.59 L176.2 1030.69 L177.5 1030.34 L178.8 1030.85 L180.1 1030.98 L181.4 1031.38 L182.7 1031.59 L184.0 1031.07 L185.3 1031.91 L186.6 1032.01 L187.9 1031.70 L189.2 1032.19 L190.5 1031.86 L191.8 1031.86 L193.1 1031.84 L194.4 1032.74 L195.7 1032.02 L197.0 1032.04 L198.3 1033.06 L199.6 1033.17 L200.9 1032.95 L202.2 1033.52 L203.5 1032.71 L204.8 1033.10 L206.1 1033.27 L207.4 1033.57 L208.7 1033.41 L210.0 1033.42 L211.3 1033.88 L212.6 1034.69 L213.9 1034.93 L215.2 1034.79 L216.5 1034.60 L217.8 1034.47 L219.1 1035.46 L220.4 1035.05 L221.7 1035.37 L223.0 1034.61 L224.3 1034.91 L225.6 1035.74 L226.9 1035.76 L228.2 1035.94 L229.5 1035.68 L230.8 1035.55 L232.1 1035.81 L233.4 1036.21 L234.7 1035.63 L236.0 1035.98 L237.3 1038.30 L238.6 1046.06 L239.9 1030.41 L241.2 1016.49 L242.5 1020.96 L243.8 1027.43 L245.1 1035.12 L246.4 1035.34 L247.7 1035.74 L249.0 1035.58 L250.3 1035.34 L251.6 1035.67 L252.9 1036.49 L254.2 1036.58 L255.5 1035.81 L256.8 1035.92 L258.1 1036.07 L259.4 1036.14 L260.7 1036.81 L262.0 1036.59 L263.3 1037.62 L264.6 1037.52 L265.9 1037.04 L267.2 1037.69 L268.5 1037.59 L269.8 1037.95 L271.1 1037.77 L272.4 1037.86 L273.7 1038.04 L275.0 1038.42 L276.3 1038.98 L277.6 1038.94 L278.9 1038.49 L280.2 1039.44 L281.5 1039.79 L282.8 1039.83 L284.1 1040.00 L285.4 1039.22 L286.7 1039.92 L288.0 1039.55 L289.3 1040.48 L290.6 1039.87 L291.9 1040.60 L293.2 1040.15 L294.5 1040.77 L295.8 1040.40 L297.1 1040.17 L298.4 1040.68 L299.7 1040.68 L301.0 1041.48 L302.3 1040.85 L303.6 1041.19 L304.9 1041.34 L306.2 1041.91 L307.5 1040.98 L308.8 1041.68 L310.1 1041.66 L311.4 1042.02 L312.7 1042.40 L314.0 1041.70 L315.3 1042.26 L316.6 1042.15 L317.9 1042.28 L319.2 1041.78 L320.5 1042.77 L321.8 1043.06 L323.1 1042.40 L324.4 1042.45 L325.7 1043.36 L327.0 1042.39 L328.3 1042.44 L331.0 1087.00" stroke="#56a64b" stroke-width="1" fill="none" stroke-opacity="1" stroke-linejoin="round"/></svg>
<span class="t" style="left:27.10px;top:995.84px;font-size:12px;line-height:12px;color:#24292e;letter-spacing:0.420px">1.25 K</span>
<span class="t" style="left:45.12px;top:1027.84px;font-size:12px;line-height:12px;color:#24292e;letter-spacing:0.540px">1 K</span>
<span class="t" style="left:43.00px;top:1059.84px;font-size:12px;line-height:12px;color:#24292e;letter-spacing:0.600px">750</span>
<span class="t" style="left:43.00px;top:1091.84px;font-size:12px;line-height:12px;color:#24292e;letter-spacing:0.600px">500</span>
<span class="t" style="left:43.00px;top:1123.84px;font-size:12px;line-height:12px;color:#24292e;letter-spacing:0.600px">250</span>
<span class="t" style="left:56.78px;top:1155.84px;font-size:12px;line-height:12px;color:#24292e;letter-spacing:0.000px">0</span>
<span class="t" style="left:71.90px;top:1171.24px;font-size:12px;line-height:12px;color:#24292e;letter-spacing:-0.100px">17:30</span>
<span class="t" style="left:138.60px;top:1171.24px;font-size:12px;line-height:12px;color:#24292e;letter-spacing:-0.100px">17:45</span>
<span class="t" style="left:205.30px;top:1171.24px;font-size:12px;line-height:12px;color:#24292e;letter-spacing:-0.100px">18:00</span>
<span class="t" style="left:272.00px;top:1171.24px;font-size:12px;line-height:12px;color:#24292e;letter-spacing:-0.100px">18:15</span>
<div class="a" style="left:360px;top:934px;width:336px;height:258px;background:#ffffff;border-radius:2px;border:1px solid #e3e5e7;box-sizing:border-box"></div>
<span class="t" style="left:368.80px;top:944.15px;font-size:14px;line-height:14px;color:#24292e;letter-spacing:0.689px;-webkit-text-stroke:0.25px #24292e">Distributor requests received (acce...</span>
<svg class="a" style="left:647.5px;top:944px;" width="14" height="14" viewBox="0 0 14 14"><circle cx="7" cy="7" r="6" stroke="#4a4e53" stroke-width="1.15" fill="none"/><path d="M7 6.4 V9.8" stroke="#4a4e53" stroke-width="1.3" stroke-linecap="round"/><circle cx="7" cy="4.3" r="0.8" fill="#4a4e53"/></svg>
<svg class="a" style="left:0;top:0" width="1400" height="1200" viewBox="0 0 1400 1200"><path d="M401.6 1003.8 L402.9 1004.2 L404.2 1004.8 L405.5 1005.4 L406.8 1005.0 L408.1 1005.2 L409.4 1005.6 L410.7 1006.5 L412.0 1006.0 L413.3 1007.0 L414.6 1007.1 L415.9 1006.8 L417.2 1007.5 L418.5 1007.6 L419.8 1007.9 L421.1 1008.8 L422.4 1008.0 L423.7 1008.2 L425.0 1009.5 L426.3 1009.1 L427.6 1009.2 L428.9 1009.6 L430.2 1009.9 L431.5 1010.8 L432.8 1010.2 L434.1 1010.5 L435.4 1011.2 L436.7 1011.4 L438.0 1012.1 L439.3 1012.3 L440.6 1011.9 L441.9 1012.0 L443.2 1013.0 L444.5 1013.5 L445.8 1012.6 L447.1 1013.7 L448.4 1014.1 L449.7 1014.1 L451.0 1013.9 L452.3 1014.8 L453.6 1015.0 L454.9 1014.6 L456.2 1015.4 L457.5 1015.2 L458.8 1015.2 L460.1 1015.8 L461.4 1016.1 L462.7 1016.4 L464.0 1017.0 L465.3 1017.5 L466.6 1017.9 L467.9 1018.2 L469.2 1018.4 L470.5 1018.4 L471.8 1018.1 L473.1 1018.2 L474.4 1019.0 L475.7 1019.2 L477.0 1019.6 L478.3 1019.2 L479.6 1019.6 L480.9 1020.7 L482.2 1020.6 L483.5 1020.9 L484.8 1020.5 L486.1 1021.1 L487.4 1022.0 L488.7 1021.9 L490.0 1022.6 L491.3 1021.7 L492.6 1022.2 L493.9 1022.7 L495.2 1022.4 L496.5 1022.9 L497.8 1022.7 L499.1 1022.3 L500.4 1022.4 L501.7 1023.6 L503.0 1022.7 L504.3 1022.9 L505.6 1023.1 L506.9 1023.7 L508.2 1024.0 L509.5 1023.6 L510.8 1023.8 L512.1 1024.2 L513.4 1023.7 L514.7 1024.0 L516.0 1024.4 L517.3 1024.5 L518.6 1023.9 L519.9 1024.1 L521.2 1024.2 L522.5 1025.1 L523.8 1025.1 L525.1 1025.6 L526.4 1025.4 L527.7 1024.9 L529.0 1025.7 L530.3 1026.0 L531.6 1025.4 L532.9 1025.1 L534.2 1025.6 L535.5 1025.6 L536.8 1025.6 L538.1 1025.6 L539.4 1025.8 L540.7 1026.8 L542.0 1025.9 L543.3 1026.7 L544.6 1026.3 L545.9 1026.4 L547.2 1027.3 L548.5 1026.8 L549.8 1026.7 L551.1 1027.2 L552.4 1027.6 L553.7 1027.5 L555.0 1028.0 L556.3 1027.6 L557.6 1027.8 L558.9 1028.2 L560.2 1028.0 L561.5 1028.3 L562.8 1028.0 L564.1 1027.6 L565.4 1027.5 L566.7 1028.3 L568.0 1028.3 L569.3 1028.5 L570.6 1028.2 L571.9 1028.1 L573.2 1027.6 L574.5 1028.4 L575.8 1027.5 L577.1 1028.7 L578.4 1039.2 L579.7 1027.4 L581.0 1015.3 L582.3 1015.2 L583.6 1025.3 L584.9 1028.1 L586.2 1027.9 L587.5 1028.6 L588.8 1028.7 L590.1 1028.9 L591.4 1028.1 L592.7 1028.9 L594.0 1029.4 L595.3 1028.7 L596.6 1028.8 L597.9 1029.6 L599.2 1029.2 L600.5 1029.3 L601.8 1030.0 L603.1 1029.6 L604.4 1029.5 L605.7 1029.6 L607.0 1029.9 L608.3 1030.4 L609.6 1030.1 L610.9 1030.7 L612.2 1030.0 L613.5 1030.3 L614.8 1030.9 L616.1 1030.8 L617.4 1031.0 L618.7 1031.6 L620.0 1030.9 L621.3 1030.9 L622.6 1030.9 L623.9 1031.5 L625.2 1031.4 L626.5 1031.7 L627.8 1031.3 L629.1 1031.4 L630.4 1032.0 L631.7 1032.5 L633.0 1032.0 L634.3 1032.9 L635.6 1032.5 L636.9 1032.4 L638.2 1033.0 L639.5 1032.4 L640.8 1032.9 L642.1 1033.3 L643.4 1033.0 L644.7 1032.9 L646.0 1032.7 L647.3 1033.3 L648.6 1033.0 L649.9 1033.3 L651.2 1033.6 L652.5 1034.1 L653.8 1033.9 L655.1 1033.8 L656.4 1034.3 L657.7 1033.7 L659.0 1033.9 L660.3 1034.3 L661.6 1034.3 L662.9 1034.0 L664.2 1034.3 L665.5 1034.9 L666.8 1034.3 L668.1 1034.9 L669.4 1034.2 L670.7 1035.4 L672.0 1035.2 L673.3 1034.8 L674.6 1073.0 L674.6 1138.2 L401.6 1138.2 Z" fill="#fcfcfc"/><path d="M401.6 1027.5 H679.6" stroke="rgba(36,41,46,0.12)" stroke-width="1"/><path d="M401.6 1082.5 H679.6" stroke="rgba(36,41,46,0.12)" stroke-width="1"/><path d="M401.6 1138.5 H679.6" stroke="rgba(36,41,46,0.12)" stroke-width="1"/><path d="M420.5 983.6 V1142.2" stroke="rgba(36,41,46,0.12)" stroke-width="1"/><path d="M490.5 983.6 V1142.2" stroke="rgba(36,41,46,0.12)" stroke-width="1"/><path d="M559.5 983.6 V1142.2" stroke="rgba(36,41,46,0.12)" stroke-width="1"/><path d="M629.5 983.6 V1142.2" stroke="rgba(36,41,46,0.12)" stroke-width="1"/><path d="M401.6 1003.81 L402.9 1004.19 L404.2 1004.78 L405.5 1005.38 L406.8 1004.98 L408.1 1005.21 L409.4 1005.60 L410.7 1006.49 L412.0 1006.01 L413.3 1006.98 L414.6 1007.14 L415.9 1006.76 L417.2 1007.49 L418.5 1007.64 L419.8 1007.86 L421.1 1008.82 L422.4 1007.99 L423.7 1008.16 L425.0 1009.53 L426.3 1009.14 L427.6 1009.16 L428.9 1009.58 L430.2 1009.88 L431.5 1010.85 L432.8 1010.21 L434.1 1010.48 L435.4 1011.18 L436.7 1011.40 L438.0 1012.14 L439.3 1012.27 L440.6 1011.95 L441.9 1012.02 L443.2 1013.04 L444.5 1013.49 L445.8 1012.60 L447.1 1013.70 L448.4 1014.12 L449.7 1014.12 L451.0 1013.86 L452.3 1014.82 L453.6 1015.00 L454.9 1014.61 L456.2 1015.41 L457.5 1015.16 L458.8 1015.21 L460.1 1015.82 L461.4 1016.08 L462.7 1016.42 L464.0 1016.98 L465.3 1017.46 L466.6 1017.87 L467.9 1018.15 L469.2 1018.43 L470.5 1018.45 L471.8 1018.13 L473.1 1018.23 L474.4 1019.03 L475.7 1019.19 L477.0 1019.61 L478.3 1019.17 L479.6 1019.55 L480.9 1020.69 L482.2 1020.56 L483.5 1020.93 L484.8 1020.47 L486.1 1021.10 L487.4 1021.97 L488.7 1021.92 L490.0 1022.59 L491.3 1021.75 L492.6 1022.17 L493.9 1022.69 L495.2 1022.38 L496.5 1022.90 L497.8 1022.74 L499.1 1022.32 L500.4 1022.41 L501.7 1023.58 L503.0 1022.66 L504.3 1022.86 L505.6 1023.14 L506.9 1023.70 L508.2 1023.98 L509.5 1023.64 L510.8 1023.78 L512.1 1024.24 L513.4 1023.74 L514.7 1023.96 L516.0 1024.36 L517.3 1024.50 L518.6 1023.90 L519.9 1024.10 L521.2 1024.24 L522.5 1025.06 L523.8 1025.13 L525.1 1025.58 L526.4 1025.44 L527.7 1024.94 L529.0 1025.66 L530.3 1026.04 L531.6 1025.38 L532.9 1025.09 L534.2 1025.64 L535.5 1025.64 L536.8 1025.62 L538.1 1025.58 L539.4 1025.78 L540.7 1026.78 L542.0 1025.92 L543.3 1026.71 L544.6 1026.33 L545.9 1026.42 L547.2 1027.29 L548.5 1026.77 L549.8 1026.75 L551.1 1027.18 L552.4 1027.58 L553.7 1027.49 L555.0 1028.00 L556.3 1027.56 L557.6 1027.82 L558.9 1028.17 L560.2 1027.95 L561.5 1028.26 L562.8 1027.96 L564.1 1027.56 L565.4 1027.55 L566.7 1028.34 L568.0 1028.29 L569.3 1028.53 L570.6 1028.23 L571.9 1028.10 L573.2 1027.60 L574.5 1028.42 L575.8 1027.54 L577.1 1028.74 L578.4 1039.17 L579.7 1027.43 L581.0 1015.32 L582.3 1015.16 L583.6 1025.25 L584.9 1028.13 L586.2 1027.89 L587.5 1028.65 L588.8 1028.71 L590.1 1028.93 L591.4 1028.10 L592.7 1028.91 L594.0 1029.36 L595.3 1028.72 L596.6 1028.76 L597.9 1029.61 L599.2 1029.19 L600.5 1029.35 L601.8 1029.96 L603.1 1029.56 L604.4 1029.45 L605.7 1029.59 L607.0 1029.86 L608.3 1030.40 L609.6 1030.12 L610.9 1030.72 L612.2 1029.99 L613.5 1030.32 L614.8 1030.89 L616.1 1030.83 L617.4 1030.97 L618.7 1031.61 L620.0 1030.93 L621.3 1030.93 L622.6 1030.87 L623.9 1031.53 L625.2 1031.42 L626.5 1031.75 L627.8 1031.30 L629.1 1031.41 L630.4 1031.95 L631.7 1032.49 L633.0 1032.03 L634.3 1032.86 L635.6 1032.55 L636.9 1032.42 L638.2 1032.96 L639.5 1032.40 L640.8 1032.93 L642.1 1033.31 L643.4 1033.03 L644.7 1032.85 L646.0 1032.67 L647.3 1033.34 L648.6 1032.96 L649.9 1033.27 L651.2 1033.56 L652.5 1034.13 L653.8 1033.90 L655.1 1033.80 L656.4 1034.30 L657.7 1033.73 L659.0 1033.91 L660.3 1034.35 L661.6 1034.29 L662.9 1033.98 L664.2 1034.29 L665.5 1034.88 L666.8 1034.27 L668.1 1034.91 L669.4 1034.21 L670.7 1035.39 L672.0 1035.15 L673.3 1034.79 L674.6 1073.00" stroke="#56a64b" stroke-width="1" fill="none" stroke-opacity="1" stroke-linejoin="round"/></svg>
<span class="t" style="left:377.12px;top:1020.84px;font-size:12px;line-height:12px;color:#24292e;letter-spacing:0.540px">1 K</span>
<span class="t" style="left:375.00px;top:1075.84px;font-size:12px;line-height:12px;color:#24292e;letter-spacing:0.600px">500</span>
<span class="t" style="left:388.78px;top:1131.84px;font-size:12px;line-height:12px;color:#24292e;letter-spacing:0.000px">0</span>
<span class="t" style="left:404.90px;top:1147.04px;font-size:12px;line-height:12px;color:#24292e;letter-spacing:-0.100px">17:30</span>
<span class="t" style="left:474.60px;top:1147.04px;font-size:12px;line-height:12px;color:#24292e;letter-spacing:-0.100px">17:45</span>
<span class="t" style="left:544.30px;top:1147.04px;font-size:12px;line-height:12px;color:#24292e;letter-spacing:-0.100px">18:00</span>
<span class="t" style="left:614.00px;top:1147.04px;font-size:12px;line-height:12px;color:#24292e;letter-spacing:-0.100px">18:15</span>
<div class="a" style="left:373px;top:1170.8px;width:14px;height:4px;background:#56a64b;border-radius:2px"></div>
<span class="t" style="left:395.00px;top:1167.04px;font-size:12px;line-height:12px;color:#24292e;letter-spacing:0.560px">rate</span>
<div class="a" style="left:704px;top:934px;width:336px;height:258px;background:#ffffff;border-radius:2px;border:1px solid #e3e5e7;box-sizing:border-box"></div>
<span class="t" style="left:712.80px;top:944.15px;font-size:14px;line-height:14px;color:#24292e;letter-spacing:0.619px;-webkit-text-stroke:0.25px #24292e">Newest seen sample age</span>
<svg class="a" style="left:900.5px;top:944px;" width="14" height="14" viewBox="0 0 14 14"><circle cx="7" cy="7" r="6" stroke="#4a4e53" stroke-width="1.15" fill="none"/><path d="M7 6.4 V9.8" stroke="#4a4e53" stroke-width="1.3" stroke-linecap="round"/><circle cx="7" cy="4.3" r="0.8" fill="#4a4e53"/></svg>
<svg class="a" style="left:0;top:0" width="1400" height="1200" viewBox="0 0 1400 1200"><path d="M740.4 1060.7 L741.6 1101.6 L742.9 1086.7 L744.1 1128.6 L745.4 1052.8 L746.6 1150.6 L747.9 1104.5 L749.1 1105.7 L750.4 1105.7 L751.6 1056.1 L752.9 1056.1 L754.1 1100.6 L755.4 1104.8 L756.6 1102.5 L757.9 1105.3 L759.1 1099.1 L760.4 1086.7 L761.6 1114.6 L762.9 1151.7 L764.1 1129.1 L765.4 1091.3 L766.6 1091.2 L767.9 1091.2 L769.1 1148.9 L770.4 1057.0 L771.6 1064.0 L772.9 1056.7 L774.1 1105.8 L775.4 1054.4 L776.6 1099.8 L777.9 1060.2 L779.1 1060.2 L780.4 1129.9 L781.6 1059.7 L782.9 1129.1 L784.1 1105.4 L785.4 1079.0 L786.6 1131.0 L787.9 1056.8 L789.1 1060.5 L790.4 1055.9 L791.6 1125.2 L792.9 1105.7 L794.1 1111.7 L795.4 1130.3 L796.6 1124.9 L797.9 1049.8 L799.1 1104.0 L800.4 1091.4 L801.6 1084.6 L802.9 1115.8 L804.1 1106.8 L805.4 1075.5 L806.6 1095.6 L807.9 1066.5 L809.1 1061.5 L810.4 1084.0 L811.6 1080.3 L812.9 1079.3 L814.1 1107.1 L815.4 1107.1 L816.6 1084.3 L817.9 1080.4 L819.1 1064.3 L820.4 1054.3 L821.6 1049.3 L822.9 1100.7 L824.1 1100.1 L825.4 1094.6 L826.6 1094.6 L827.9 1055.7 L829.1 1096.5 L830.4 1081.2 L831.6 1081.2 L832.9 1052.1 L834.1 1106.7 L835.4 1106.7 L836.6 1090.6 L837.9 1129.1 L839.1 1102.4 L840.4 1064.0 L841.6 1104.9 L842.9 1153.7 L844.1 1050.2 L845.4 1059.4 L846.6 1086.1 L847.9 1069.4 L849.1 1060.5 L850.4 1063.3 L851.6 1052.6 L852.9 1111.9 L854.1 1153.4 L855.4 1114.1 L856.6 1053.7 L857.9 1094.5 L859.1 1054.0 L860.4 1107.0 L861.6 1083.0 L862.9 1069.5 L864.1 1085.8 L865.4 1085.8 L866.6 1055.1 L867.9 1055.1 L869.1 1057.0 L870.4 1085.0 L871.6 1129.7 L872.9 1111.0 L874.1 1092.0 L875.4 1131.5 L876.6 1082.7 L877.9 1081.1 L879.1 1081.1 L880.4 1116.4 L881.6 1051.6 L882.9 1051.6 L884.1 1106.7 L885.4 1052.4 L886.6 1090.0 L887.9 1093.7 L889.1 1099.6 L890.4 1129.2 L891.6 1001.0 L892.9 1081.7 L894.1 1085.8 L895.4 1089.1 L896.6 1052.4 L897.9 1125.8 L899.1 1125.3 L900.4 1153.8 L901.6 1123.7 L902.9 1130.6 L904.1 1125.9 L905.4 1081.3 L906.6 1106.9 L907.9 1111.2 L909.1 1126.4 L910.4 1086.4 L911.6 1050.1 L912.9 1056.4 L914.1 1092.9 L915.4 1059.8 L916.6 1085.7 L917.9 1099.5 L919.1 1089.8 L920.4 1080.3 L921.6 1110.3 L922.9 1051.2 L924.1 1151.2 L925.4 1151.2 L926.6 1124.7 L927.9 1055.2 L929.1 1089.2 L930.4 1089.2 L931.6 1056.7 L932.9 1051.7 L934.1 1130.9 L935.4 1090.3 L936.6 1054.3 L937.9 1069.6 L939.1 1054.1 L940.4 1061.9 L941.6 1049.5 L942.9 1126.9 L944.1 1108.6 L945.4 1108.6 L946.6 1108.6 L947.9 1127.7 L949.1 1067.0 L950.4 1054.5 L951.6 1105.5 L952.9 1060.1 L954.1 1095.6 L955.4 1080.4 L956.6 1091.6 L957.9 1059.7 L959.1 1126.1 L960.4 1090.1 L961.6 1074.7 L962.9 1111.5 L964.1 1086.7 L965.4 1061.6 L966.6 1064.8 L967.9 1055.8 L969.1 1099.3 L970.4 1051.3 L971.6 1056.6 L972.9 1055.8 L974.1 1055.8 L975.4 1097.3 L976.6 1129.7 L977.9 1124.2 L979.1 1124.2 L980.4 1127.7 L981.6 1129.6 L982.9 1081.8 L984.1 1105.3 L985.4 1055.6 L986.6 1070.7 L987.9 1070.7 L989.1 1107.0 L990.4 1101.8 L991.6 1063.2 L992.9 1052.9 L994.1 1149.2 L995.4 1050.0 L996.6 1130.5 L997.9 1080.4 L999.1 1112.4 L1000.4 1125.3 L1001.6 1089.7 L1002.9 1091.5 L1004.1 1079.9 L1005.4 1128.3 L1006.6 1149.3 L1007.9 1112.1 L1009.1 1150.7 L1010.4 1086.1 L1011.6 1114.2 L1012.9 1114.6 L1014.1 1086.6 L1015.4 1156.2 L1016.6 1156.2 L1017.9 1063.6 L1019.1 1154.6 L1020.4 1065.4 L1021.6 1107.1 L1022.9 1129.5 L1022.9 1162.4 L740.4 1162.4 Z" fill="#fcfcfc"/><path d="M740.4 1013.5 H1023.6" stroke="rgba(36,41,46,0.12)" stroke-width="1"/><path d="M740.4 1063.5 H1023.6" stroke="rgba(36,41,46,0.12)" stroke-width="1"/><path d="M740.4 1112.5 H1023.6" stroke="rgba(36,41,46,0.12)" stroke-width="1"/><path d="M740.4 1162.5 H1023.6" stroke="rgba(36,41,46,0.12)" stroke-width="1"/><path d="M759.5 983.6 V1166.4" stroke="rgba(36,41,46,0.12)" stroke-width="1"/><path d="M830.5 983.6 V1166.4" stroke="rgba(36,41,46,0.12)" stroke-width="1"/><path d="M901.5 983.6 V1166.4" stroke="rgba(36,41,46,0.12)" stroke-width="1"/><path d="M972.5 983.6 V1166.4" stroke="rgba(36,41,46,0.12)" stroke-width="1"/><path d="M740.4 1060.71 L741.6 1101.57 L742.9 1086.71 L744.1 1128.65 L745.4 1052.78 L746.6 1150.63 L747.9 1104.45 L749.1 1105.68 L750.4 1105.68 L751.6 1056.09 L752.9 1056.09 L754.1 1100.62 L755.4 1104.80 L756.6 1102.48 L757.9 1105.33 L759.1 1099.09 L760.4 1086.73 L761.6 1114.61 L762.9 1151.70 L764.1 1129.14 L765.4 1091.30 L766.6 1091.24 L767.9 1091.24 L769.1 1148.90 L770.4 1056.96 L771.6 1064.04 L772.9 1056.73 L774.1 1105.82 L775.4 1054.36 L776.6 1099.81 L777.9 1060.20 L779.1 1060.20 L780.4 1129.95 L781.6 1059.74 L782.9 1129.12 L784.1 1105.39 L785.4 1078.98 L786.6 1130.96 L787.9 1056.85 L789.1 1060.47 L790.4 1055.94 L791.6 1125.23 L792.9 1105.73 L794.1 1111.69 L795.4 1130.26 L796.6 1124.89 L797.9 1049.77 L799.1 1103.98 L800.4 1091.36 L801.6 1084.59 L802.9 1115.81 L804.1 1106.75 L805.4 1075.54 L806.6 1095.59 L807.9 1066.53 L809.1 1061.51 L810.4 1084.01 L811.6 1080.26 L812.9 1079.30 L814.1 1107.12 L815.4 1107.12 L816.6 1084.31 L817.9 1080.41 L819.1 1064.27 L820.4 1054.32 L821.6 1049.34 L822.9 1100.68 L824.1 1100.12 L825.4 1094.59 L826.6 1094.59 L827.9 1055.73 L829.1 1096.51 L830.4 1081.18 L831.6 1081.18 L832.9 1052.14 L834.1 1106.72 L835.4 1106.72 L836.6 1090.55 L837.9 1129.08 L839.1 1102.41 L840.4 1064.01 L841.6 1104.88 L842.9 1153.65 L844.1 1050.21 L845.4 1059.37 L846.6 1086.15 L847.9 1069.41 L849.1 1060.53 L850.4 1063.32 L851.6 1052.62 L852.9 1111.87 L854.1 1153.40 L855.4 1114.12 L856.6 1053.69 L857.9 1094.52 L859.1 1054.05 L860.4 1107.00 L861.6 1082.96 L862.9 1069.46 L864.1 1085.76 L865.4 1085.76 L866.6 1055.15 L867.9 1055.15 L869.1 1056.99 L870.4 1084.97 L871.6 1129.65 L872.9 1110.97 L874.1 1092.00 L875.4 1131.48 L876.6 1082.66 L877.9 1081.09 L879.1 1081.09 L880.4 1116.41 L881.6 1051.65 L882.9 1051.65 L884.1 1106.65 L885.4 1052.37 L886.6 1090.01 L887.9 1093.72 L889.1 1099.63 L890.4 1129.19 L891.6 1000.97 L892.9 1081.75 L894.1 1085.77 L895.4 1089.10 L896.6 1052.44 L897.9 1125.78 L899.1 1125.31 L900.4 1153.79 L901.6 1123.67 L902.9 1130.62 L904.1 1125.94 L905.4 1081.29 L906.6 1106.88 L907.9 1111.20 L909.1 1126.36 L910.4 1086.44 L911.6 1050.12 L912.9 1056.37 L914.1 1092.94 L915.4 1059.76 L916.6 1085.70 L917.9 1099.50 L919.1 1089.78 L920.4 1080.28 L921.6 1110.28 L922.9 1051.24 L924.1 1151.23 L925.4 1151.23 L926.6 1124.74 L927.9 1055.20 L929.1 1089.18 L930.4 1089.18 L931.6 1056.67 L932.9 1051.69 L934.1 1130.94 L935.4 1090.31 L936.6 1054.28 L937.9 1069.57 L939.1 1054.09 L940.4 1061.88 L941.6 1049.46 L942.9 1126.89 L944.1 1108.59 L945.4 1108.59 L946.6 1108.59 L947.9 1127.71 L949.1 1067.03 L950.4 1054.53 L951.6 1105.54 L952.9 1060.13 L954.1 1095.63 L955.4 1080.40 L956.6 1091.61 L957.9 1059.69 L959.1 1126.14 L960.4 1090.09 L961.6 1074.65 L962.9 1111.47 L964.1 1086.65 L965.4 1061.63 L966.6 1064.78 L967.9 1055.80 L969.1 1099.30 L970.4 1051.33 L971.6 1056.62 L972.9 1055.75 L974.1 1055.75 L975.4 1097.31 L976.6 1129.72 L977.9 1124.17 L979.1 1124.17 L980.4 1127.65 L981.6 1129.57 L982.9 1081.81 L984.1 1105.34 L985.4 1055.61 L986.6 1070.68 L987.9 1070.68 L989.1 1106.98 L990.4 1101.80 L991.6 1063.17 L992.9 1052.95 L994.1 1149.18 L995.4 1050.01 L996.6 1130.50 L997.9 1080.39 L999.1 1112.44 L1000.4 1125.26 L1001.6 1089.68 L1002.9 1091.49 L1004.1 1079.89 L1005.4 1128.26 L1006.6 1149.32 L1007.9 1112.14 L1009.1 1150.65 L1010.4 1086.05 L1011.6 1114.15 L1012.9 1114.62 L1014.1 1086.63 L1015.4 1156.22 L1016.6 1156.22 L1017.9 1063.57 L1019.1 1154.60 L1020.4 1065.43 L1021.6 1107.09 L1022.9 1129.47" stroke="#56a64b" stroke-width="1" fill="none" stroke-opacity="1" stroke-linejoin="round"/></svg>
<span class="t" style="left:718.24px;top:1006.84px;font-size:12px;line-height:12px;color:#24292e;letter-spacing:0.480px">3 s</span>
<span class="t" style="left:718.24px;top:1056.84px;font-size:12px;line-height:12px;color:#24292e;letter-spacing:0.480px">2 s</span>
<span class="t" style="left:718.24px;top:1105.84px;font-size:12px;line-height:12px;color:#24292e;letter-spacing:0.480px">1 s</span>
<span class="t" style="left:718.24px;top:1155.84px;font-size:12px;line-height:12px;color:#24292e;letter-spacing:0.480px">0 s</span>
<span class="t" style="left:743.90px;top:1171.24px;font-size:12px;line-height:12px;color:#24292e;letter-spacing:-0.100px">17:30</span>
<span class="t" style="left:814.90px;top:1171.24px;font-size:12px;line-height:12px;color:#24292e;letter-spacing:-0.100px">17:45</span>
<span class="t" style="left:885.90px;top:1171.24px;font-size:12px;line-height:12px;color:#24292e;letter-spacing:-0.100px">18:00</span>
<span class="t" style="left:956.90px;top:1171.24px;font-size:12px;line-height:12px;color:#24292e;letter-spacing:-0.100px">18:15</span>
<div class="a" style="left:1048px;top:934px;width:336px;height:258px;background:#ffffff;border-radius:2px;border:1px solid #e3e5e7;box-sizing:border-box"></div>
<span class="t" style="left:1056.80px;top:944.15px;font-size:14px;line-height:14px;color:#24292e;letter-spacing:0.691px;-webkit-text-stroke:0.25px #24292e">Distributor discarded requests rate</span>
<svg class="a" style="left:1311.5px;top:944px;" width="14" height="14" viewBox="0 0 14 14"><circle cx="7" cy="7" r="6" stroke="#4a4e53" stroke-width="1.15" fill="none"/><path d="M7 6.4 V9.8" stroke="#4a4e53" stroke-width="1.3" stroke-linecap="round"/><circle cx="7" cy="4.3" r="0.8" fill="#4a4e53"/></svg>
<span class="t" style="left:1182.50px;top:1069.56px;font-size:18px;line-height:18px;color:#5a5e63;letter-spacing:0.417px">No data</span>
</div></body></html>
